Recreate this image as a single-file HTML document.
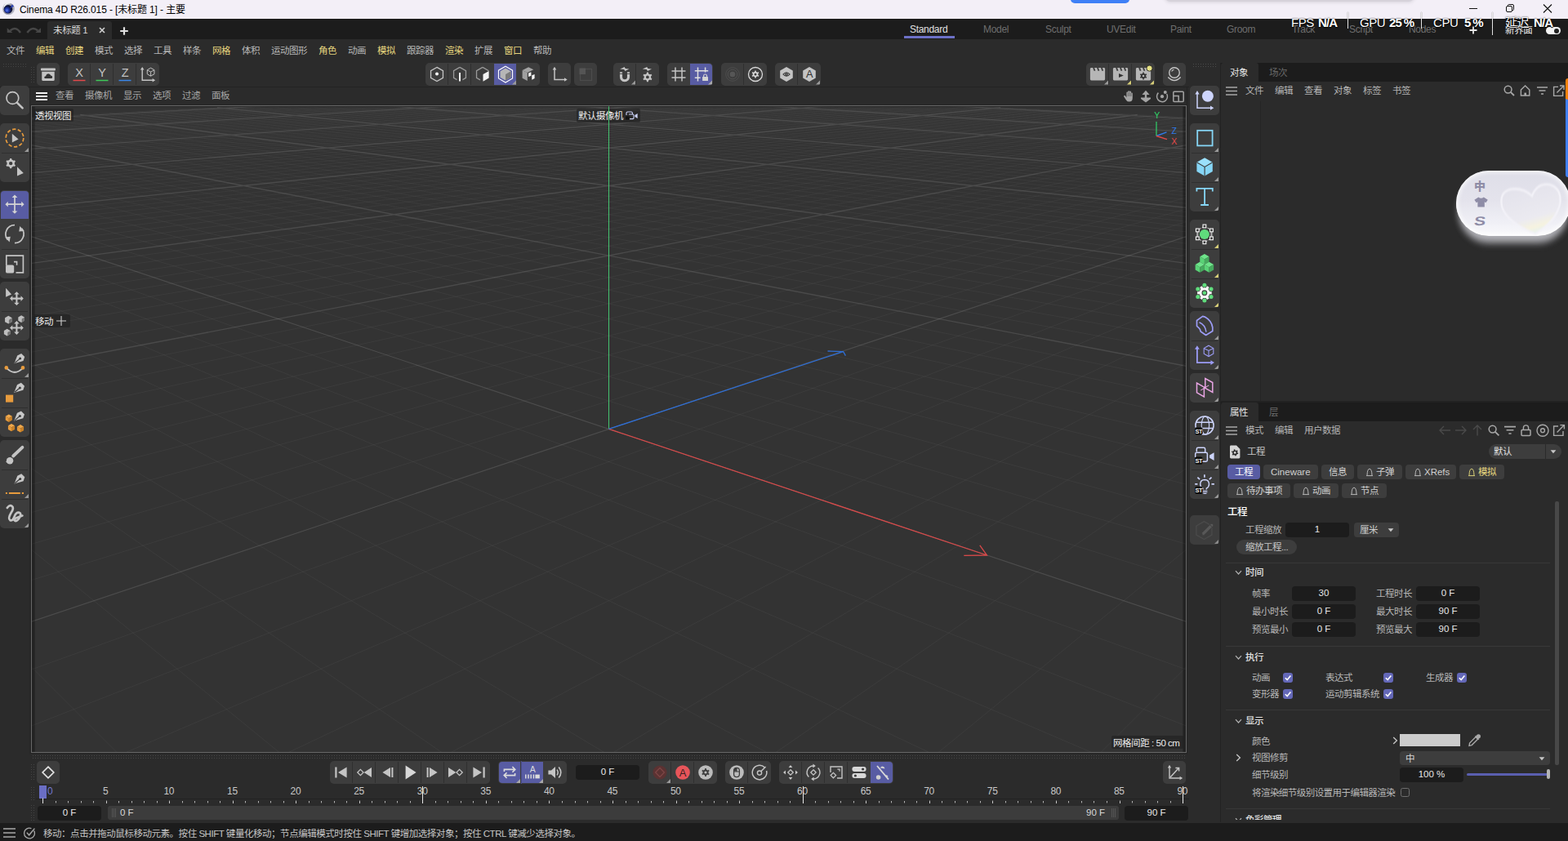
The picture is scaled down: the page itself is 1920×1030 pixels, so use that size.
<!DOCTYPE html><html lang="zh"><head><meta charset="utf-8"><title>Cinema 4D</title><style>
html,body{margin:0;padding:0;}
body{width:1920px;height:1030px;overflow:hidden;background:#2b2b2b;font-family:"Liberation Sans","Noto Sans CJK SC",sans-serif;font-size:11.5px;color:#bdbdbd;position:relative;letter-spacing:-0.35px;}
div,span,svg{position:absolute;box-sizing:border-box;}
.t{white-space:nowrap;line-height:16px;height:16px;}
.grp{background:#3d3d3d;border-radius:5px;overflow:hidden;}
.sep{background:#2f2f2f;}
.act{background:#585ca3;}
.fld{background:#1c1c1c;border-radius:4px;color:#e6e6e6;text-align:center;line-height:17px;white-space:nowrap;letter-spacing:0;}
.pill{background:#3d3d3d;border-radius:4px;color:#c8c8c8;line-height:18px;white-space:nowrap;}
.cb{width:12px;height:12px;border-radius:3px;background:#6468b8;}
.hl{height:1px;background:#3a3a3a;}
.b{font-weight:bold;color:#dcdcdc;}
</style></head><body><div style="left:36px;top:106px;width:1418px;height:818px;background:#2b2b2b;border:1px solid #232323;border-left-color:#272727;border-bottom-color:#2b2b2b;"></div><svg style="left:44px;top:113px;" width="15" height="11" viewBox="0 0 15 11"><path d="M0 1H14M0 5H14M0 9H14" stroke="#f4f4f4" stroke-width="2"/></svg><span class="t" style="left:68px;top:109.2px;color:#a6a6a6;font-size:11.5px;letter-spacing:-0.5px;">查看</span><span class="t" style="left:104px;top:109.2px;color:#a6a6a6;font-size:11.5px;letter-spacing:-0.5px;">摄像机</span><span class="t" style="left:151px;top:109.2px;color:#a6a6a6;font-size:11.5px;letter-spacing:-0.5px;">显示</span><span class="t" style="left:187px;top:109.2px;color:#a6a6a6;font-size:11.5px;letter-spacing:-0.5px;">选项</span><span class="t" style="left:223px;top:109.2px;color:#a6a6a6;font-size:11.5px;letter-spacing:-0.5px;">过滤</span><span class="t" style="left:259px;top:109.2px;color:#a6a6a6;font-size:11.5px;letter-spacing:-0.5px;">面板</span><svg style="left:1375px;top:110px;" width="78" height="16" viewBox="0 0 78 16"><path d="M4.4 9.4V3.6Q4.4 2.6 5.3 2.6Q6.2 2.6 6.2 3.6V2.2Q6.2 1.2 7.15 1.2Q8.1 1.2 8.1 2.2V2.6Q8.1 1.6 9.05 1.6Q10 1.6 10 2.6V4.2Q10 3.4 10.9 3.4Q11.8 3.4 11.8 4.4V10Q11.8 14.6 7.8 14.6Q5.2 14.6 3.9 12.4L1.3 8.4Q0.8 7.4 1.6 6.9Q2.4 6.5 3.1 7.5Z" fill="#a4a4a4"/><path d="M6.2 3.4V8M8.1 2.6V8M10 4V8" stroke="#2b2b2b" stroke-width="0.5"/><path d="M28 0.8L32.6 6H29.2V9.4H34V11L28 15.6L22 11V9.4H26.8V6H23.4Z" fill="#a4a4a4"/><path d="M43.4 3.6A6.5 6.5 0 1 0 53.7 5" fill="none" stroke="#a4a4a4" stroke-width="1.5"/><circle cx="51.8" cy="2.9" r="2" fill="#a4a4a4"/><circle cx="48" cy="8.2" r="2.1" fill="#a4a4a4"/><rect x="61.8" y="2.2" width="12.4" height="12.4" rx="1" fill="none" stroke="#a4a4a4" stroke-width="1.5"/><path d="M61.8 7.4H68.2V14.6" fill="none" stroke="#a4a4a4" stroke-width="1.5"/></svg><div style="left:38px;top:129px;width:1415px;height:793px;background:#333333;border:1px solid #686868;box-shadow:0 0 0 1px #252525;"></div><svg style="left:39px;top:130px;overflow:hidden;" width="1413" height="791" viewBox="0 0 1413 791"><defs><linearGradient id="fade" x1="0" y1="0" x2="0" y2="1"><stop offset="0" stop-color="#fff" stop-opacity="0"/><stop offset="0.002" stop-color="#fff" stop-opacity="1"/><stop offset="1" stop-color="#fff" stop-opacity="1"/></linearGradient><linearGradient id="fade2" x1="0" y1="0" x2="0" y2="1"><stop offset="0" stop-color="#fff" stop-opacity="0"/><stop offset="0.004" stop-color="#fff" stop-opacity="0.75"/><stop offset="0.1" stop-color="#fff" stop-opacity="0.9"/><stop offset="0.25" stop-color="#fff" stop-opacity="1"/></linearGradient><mask id="gm" maskUnits="userSpaceOnUse" x="0" y="0" width="1413" height="791"><rect x="0" y="0" width="1413" height="791" fill="url(#fade)"/></mask><mask id="gm2" maskUnits="userSpaceOnUse" x="0" y="0" width="1413" height="791"><rect x="0" y="0" width="1413" height="791" fill="url(#fade2)"/></mask></defs><g mask="url(#gm2)" fill="none"><path d="M-2.0 13.8L294.1 -2.0M-2.0 16.6L339.3 -2.0M-2.0 18.1L361.9 -2.0M-2.0 19.6L384.5 -2.0M-2.0 21.2L407.1 -2.0M-2.0 22.7L429.7 -2.0M-2.0 24.4L452.4 -2.0M-2.0 26.1L475.0 -2.0M-2.0 27.8L497.6 -2.0M-2.0 29.5L520.2 -2.0M-2.0 33.2L565.4 -2.0M-2.0 35.1L588.0 -2.0M-2.0 37.1L610.6 -2.0M-2.0 39.1L633.2 -2.0M-2.0 41.2L655.8 -2.0M-2.0 43.4L678.4 -2.0M-2.0 45.6L701.0 -2.0M-2.0 47.9L723.6 -2.0M-2.0 50.2L746.2 -2.0M-2.0 55.1L791.4 -2.0M-2.0 57.7L814.0 -2.0M-2.0 60.4L836.6 -2.0M-2.0 63.1L859.2 -2.0M-2.0 66.0L881.8 -2.0M-2.0 68.9L904.4 -2.0M-2.0 72.0L927.0 -2.0M-2.0 75.2L949.6 -2.0M-2.0 78.4L972.2 -2.0M-2.0 85.4L1017.4 -2.0M-2.0 89.1L1040.1 -2.0M-2.0 92.9L1062.7 -2.0M-2.0 96.8L1085.3 -2.0M-2.0 101.0L1107.9 -2.0M-2.0 105.3L1126.3 -1.6M-2.0 109.8L1140.9 -0.8M-2.0 114.5L1155.8 -0.0M-2.0 119.4L1170.9 0.8M-2.0 129.9L1201.8 2.4M-2.0 135.5L1217.6 3.3M-2.0 141.4L1233.7 4.1M-2.0 147.6L1250.0 5.0M-2.0 154.1L1266.6 5.9M-2.0 161.0L1283.5 6.8M-2.0 168.3L1300.6 7.7M-2.0 175.9L1318.0 8.6M-2.0 184.0L1335.8 9.6M-2.0 201.7L1372.1 11.5M-2.0 211.4L1390.8 12.5M-2.0 221.8L1409.7 13.5M-2.0 232.8L1415.0 16.7M-2.0 244.6L1415.0 20.9M-2.0 257.3L1415.0 25.4M-2.0 270.9L1415.0 30.3M-2.0 285.6L1415.0 35.5M-2.0 301.5L1415.0 41.2M-2.0 337.5L1415.0 54.1M-2.0 685.4L105.6 793.0M-2.0 358.0L1415.0 61.5M-2.0 542.0L304.8 793.0M-2.0 380.6L1415.0 69.5M-2.0 442.6L504.1 793.0M-2.0 405.4L1415.0 78.4M-2.0 369.8L703.4 793.0M-2.0 432.9L1415.0 88.2M-2.0 314.1L902.6 793.0M-2.0 463.6L1415.0 99.2M-2.0 270.1L1101.9 793.0M-2.0 498.0L1415.0 111.5M-2.0 234.5L1301.2 793.0M-2.0 536.8L1415.0 125.4M-2.0 205.1L1415.0 759.6M-2.0 581.0L1415.0 141.2M-2.0 180.4L1415.0 690.5M-2.0 690.5L1415.0 180.4M-2.0 141.2L1415.0 581.0M-2.0 759.6L1415.0 205.1M-2.0 125.4L1415.0 536.8M111.8 793.0L1415.0 234.5M-2.0 111.5L1415.0 498.0M311.1 793.0L1415.0 270.1M-2.0 99.2L1415.0 463.6M510.4 793.0L1415.0 314.1M-2.0 88.2L1415.0 432.9M709.6 793.0L1415.0 369.8M-2.0 78.4L1415.0 405.4M908.9 793.0L1415.0 442.6M-2.0 69.5L1415.0 380.6M1108.2 793.0L1415.0 542.0M-2.0 61.5L1415.0 358.0M1307.4 793.0L1415.0 685.4M-2.0 54.1L1415.0 337.5M-2.0 41.2L1415.0 301.5M-2.0 35.5L1415.0 285.6M-2.0 30.3L1415.0 270.9M-2.0 25.4L1415.0 257.3M-2.0 20.9L1415.0 244.6M-2.0 16.7L1415.0 232.8M3.3 13.5L1415.0 221.8M22.2 12.5L1415.0 211.4M40.9 11.5L1415.0 201.7M77.2 9.6L1415.0 184.0M95.0 8.6L1415.0 175.9M112.4 7.7L1415.0 168.3M129.5 6.8L1415.0 161.0M146.4 5.9L1415.0 154.1M163.0 5.0L1415.0 147.6M179.3 4.1L1415.0 141.4M195.4 3.3L1415.0 135.5M211.2 2.4L1415.0 129.9M242.1 0.8L1415.0 119.4M257.2 -0.0L1415.0 114.5M272.1 -0.8L1415.0 109.8M286.7 -1.6L1415.0 105.3M305.1 -2.0L1415.0 101.0M327.7 -2.0L1415.0 96.8M350.3 -2.0L1415.0 92.9M372.9 -2.0L1415.0 89.1M395.6 -2.0L1415.0 85.4M440.8 -2.0L1415.0 78.4M463.4 -2.0L1415.0 75.2M486.0 -2.0L1415.0 72.0M508.6 -2.0L1415.0 68.9M531.2 -2.0L1415.0 66.0M553.8 -2.0L1415.0 63.1M576.4 -2.0L1415.0 60.4M599.0 -2.0L1415.0 57.7M621.6 -2.0L1415.0 55.1M666.8 -2.0L1415.0 50.2M689.4 -2.0L1415.0 47.9M712.0 -2.0L1415.0 45.6M734.6 -2.0L1415.0 43.4M757.2 -2.0L1415.0 41.2M779.8 -2.0L1415.0 39.1M802.4 -2.0L1415.0 37.1M825.0 -2.0L1415.0 35.1M847.6 -2.0L1415.0 33.2M892.8 -2.0L1415.0 29.5M915.4 -2.0L1415.0 27.8M938.0 -2.0L1415.0 26.1M960.6 -2.0L1415.0 24.4M983.3 -2.0L1415.0 22.7M1005.9 -2.0L1415.0 21.2M1028.5 -2.0L1415.0 19.6M1051.1 -2.0L1415.0 18.1M1073.7 -2.0L1415.0 16.6M1118.9 -2.0L1415.0 13.8" stroke="#fff" stroke-opacity="0.042" stroke-width="1"/></g><g mask="url(#gm)" fill="none"><path d="M-2.0 15.2L316.7 -2.0M-2.0 31.4L542.8 -2.0M-2.0 52.6L768.8 -2.0M-2.0 81.8L994.8 -2.0M-2.0 124.5L1186.2 1.6M-2.0 192.6L1353.8 10.5M-2.0 318.7L1415.0 47.4M-2.0 47.4L1415.0 318.7M59.2 10.5L1415.0 192.6M226.8 1.6L1415.0 124.5M418.2 -2.0L1415.0 81.8M644.2 -2.0L1415.0 52.6M870.2 -2.0L1415.0 31.4M1096.3 -2.0L1415.0 15.2" stroke="#fff" stroke-opacity="0.115" stroke-width="1.4"/><path d="M-2.0 631.7L1415.0 159.3M-2.0 159.3L1415.0 631.7" stroke="#fff" stroke-opacity="0.125" stroke-width="1.15"/></g><path d="M706.5 395.4V0" stroke="#45c470" stroke-width="1"/><path d="M706.5 395.4L1169.5 550M1141.3 550.4L1169.5 550L1160.8 537.8" stroke="#d94a4a" stroke-width="1.3" fill="none"/><path d="M706.5 395.4L993.5999999999999 300.6M974.5 300L993.5999999999999 300.6L996.4000000000001 305.6" stroke="#2f6fd6" stroke-width="1.3" fill="none"/><rect x="0" y="0" width="3.6" height="791" fill="#000" fill-opacity="0.3"/><rect x="1409.4" y="0" width="3.6" height="791" fill="#000" fill-opacity="0.3"/><rect x="3.6" y="0" width="1405.8" height="1" fill="#000" fill-opacity="0.25"/><path d="M1377 36.5V19" stroke="#2fd46a" stroke-width="1.2"/><path d="M1377 36.5L1389.5 31.9" stroke="#2f7bea" stroke-width="1.4"/><path d="M1377 36.5L1390 40.7" stroke="#e34a4a" stroke-width="1.4"/><text x="1377.6" y="14.599999999999994" font-size="10.5" text-anchor="middle" fill="#2fd46a" font-family="Liberation Sans,sans-serif">Y</text><text x="1398.6" y="33.599999999999994" font-size="10.5" text-anchor="middle" fill="#2f7bea" font-family="Liberation Sans,sans-serif">Z</text><text x="1398.6" y="47" font-size="10.5" text-anchor="middle" fill="#e34a4a" font-family="Liberation Sans,sans-serif">X</text></svg><div style="left:41px;top:133px;width:49px;height:16px;background:rgba(30,30,30,.55);border-radius:2px;"></div><span class="t" style="left:43px;top:133.5px;color:#ececec;font-size:11.5px;letter-spacing:-0.5px;">透视视图</span><div style="left:706px;top:132.5px;width:78px;height:17px;background:rgba(30,30,30,.55);border-radius:2px;"></div><span class="t" style="left:708px;top:133.5px;color:#ececec;font-size:11.5px;letter-spacing:-0.5px;">默认摄像机</span><svg style="left:765px;top:135px;" width="17" height="12" viewBox="0 0 17 12"><path d="M2 6V3.4Q2 2 3.4 2H8Q9.4 2 9.4 3.4V5" fill="none" stroke="#cdd4fb" stroke-width="1.1"/><path d="M5 5H10Q11 5 11 6V9.6Q11 10.6 10 10.6H6" fill="none" stroke="#cdd4fb" stroke-width="1.1"/><path d="M15.6 4V10L12.4 8V6Z" fill="#cdd4fb"/><rect x="1" y="7.4" width="4.6" height="4" rx="1" fill="#111"/></svg><div style="left:745px;top:131px;width:1px;height:20px;background:#45c470;"></div><div style="left:41px;top:385px;width:45px;height:16px;background:rgba(30,30,30,.55);border-radius:2px;"></div><span class="t" style="left:43px;top:385.5px;color:#ececec;font-size:11.5px;letter-spacing:-0.5px;">移动</span><svg style="left:68px;top:386px;" width="14" height="14" viewBox="0 0 14 14"><path d="M7 1V13M1 7H13" stroke="#cfcfcf" stroke-width="1.1"/></svg><div style="left:1361px;top:901px;width:88px;height:16px;background:rgba(30,30,30,.55);border-radius:2px;"></div><span class="t" style="left:1363px;top:901.5px;color:#ececec;font-size:11.5px;letter-spacing:-0.45px;">网格间距 : 50 cm</span><svg style="left:40px;top:925px;" width="1412" height="5" viewBox="0 0 1412 5"><path d="M0 .5H1412M0 3.5H1412" stroke="#484848" stroke-width="1" stroke-dasharray="1 2"/></svg><div style="left:0px;top:106px;width:1456px;height:1px;background:#232323;"></div><svg style="left:4px;top:78px;" width="30" height="5" viewBox="0 0 30 5"><path d="M0 .5H29M0 3.5H29" stroke="#444" stroke-width="1" stroke-dasharray="1 2"/></svg><svg style="left:38px;top:82px;" width="5" height="20" viewBox="0 0 5 20"><path d="M.5 0V20M3.5 0V20" stroke="#444" stroke-width="1" stroke-dasharray="1 2"/></svg><div class="grp" style="left:45px;top:77px;width:28px;height:27.5px;"><svg style="left:0px;top:0" width="28" height="27.5" viewBox="0 0 28 27.5"><rect x="5" y="6.6" width="17.9" height="2.9" rx="0.8" fill="#c4c4c4"/><path d="M6.25 10.75H21.7V20.4Q21.7 22 20.1 22H7.85Q6.25 22 6.25 20.4Z" fill="#c4c4c4"/><path d="M10.6 19.1Q9.2 19.1 9.2 17.7Q9.3 16.2 11 16.2Q11.6 13.4 14.2 13.3Q16.6 13.4 17.2 15.6Q19.2 15.6 19.2 17.4Q19.2 19.1 17.6 19.1Z" fill="#333"/></svg></div><div class="grp" style="left:83px;top:77px;width:112px;height:27.5px;"><svg style="left:0px;top:0" width="28" height="27.5" viewBox="0 0 28 27.5"><text x="14" y="16.5" font-size="14.5" text-anchor="middle" fill="#c4c4c4" font-family="Liberation Sans,sans-serif">X</text><path d="M6.5 21.5H21.5" stroke="#e2484b" stroke-width="1.6"/></svg><div class="sep" style="left:27px;top:1px;width:1px;height:25.5px"></div><svg style="left:28px;top:0" width="28" height="27.5" viewBox="0 0 28 27.5"><text x="14" y="16.5" font-size="14.5" text-anchor="middle" fill="#c4c4c4" font-family="Liberation Sans,sans-serif">Y</text><path d="M6.5 21.5H21.5" stroke="#3fc95a" stroke-width="1.6"/></svg><div class="sep" style="left:55px;top:1px;width:1px;height:25.5px"></div><svg style="left:56px;top:0" width="28" height="27.5" viewBox="0 0 28 27.5"><text x="14" y="16.5" font-size="14.5" text-anchor="middle" fill="#c4c4c4" font-family="Liberation Sans,sans-serif">Z</text><path d="M6.5 21.5H21.5" stroke="#3a86e8" stroke-width="1.6"/></svg><div class="sep" style="left:83px;top:1px;width:1px;height:25.5px"></div><svg style="left:84px;top:0" width="28" height="27.5" viewBox="0 0 28 27.5"><path d="M7.2 7V21.2H21" stroke="#c4c4c4" stroke-width="1.4" fill="none"/><path d="M4.9 8.6L7.2 5L9.5 8.6ZM19.6 18.9L23.2 21.2L19.6 23.5Z" fill="#c4c4c4"/><path d="M17.60 6.20L21.93 8.70L21.93 13.70L17.60 16.20L13.27 13.70L13.27 8.70Z" fill="none" stroke="#c4c4c4" stroke-width="1"/><path d="M13.3 8.8L17.6 11L21.9 8.8M17.6 11V16" stroke="#c4c4c4" stroke-width="0.9" fill="none"/></svg></div><div class="grp" style="left:521px;top:77px;width:140px;height:27.5px;"><svg style="left:0px;top:0" width="28" height="27.5" viewBox="0 0 28 27.5"><path d="M14.00 5.40L21.45 9.70L21.45 18.30L14.00 22.60L6.55 18.30L6.55 9.70Z" fill="none" stroke="#c4c4c4" stroke-width="1.3"/><circle cx="14" cy="13.5" r="2" fill="#f4f4f4"/></svg><div class="sep" style="left:27px;top:1px;width:1px;height:25.5px"></div><svg style="left:28px;top:0" width="28" height="27.5" viewBox="0 0 28 27.5"><path d="M14 5.4L21.45 9.7V18.3L17.5 20.6M10.5 20.6L6.55 18.3V9.7L14 5.4" fill="none" stroke="#9a9a9a" stroke-width="1.3"/><path d="M14 12V22.5" stroke="#f4f4f4" stroke-width="2"/></svg><div class="sep" style="left:55px;top:1px;width:1px;height:25.5px"></div><svg style="left:56px;top:0" width="28" height="27.5" viewBox="0 0 28 27.5"><path d="M14 5.4L6.55 9.7V18.3L11 20.9M14 5.4L21.45 9.7" fill="none" stroke="#9a9a9a" stroke-width="1.3"/><path d="M14.5 14L21.6 10V18.6L14.5 22.7Z" fill="#f4f4f4"/></svg><div class="act" style="left:84px;top:1px;width:27px;height:25.5px;border-radius:0"></div><svg style="left:84px;top:0" width="28" height="27.5" viewBox="0 0 28 27.5"><path d="M14.00 4.20L22.57 9.15L22.57 19.05L14.00 24.00L5.43 19.05L5.43 9.15Z" fill="none" stroke="#ffffff" stroke-width="1.1"/><path d="M14.00 6.60L20.50 10.35L20.50 17.85L14.00 21.60L7.50 17.85L7.50 10.35Z" fill="#b6b6b6"/><path d="M14 14.1L20.5 10.35V17.85L14 21.6Z" fill="#7a7a7a"/><path d="M27 21.5V26.5H22Z" fill="#9a9a9a"/></svg><svg style="left:112px;top:0" width="28" height="27.5" viewBox="0 0 28 27.5"><path d="M6.6 9.1L14.1 5.3L20.3 8.25L12.8 12Z" fill="#a4a4a4"/><path d="M6.6 9.1L12.8 12V22L6.6 18.7Z" fill="#a0a0a0"/><path d="M14.1 12.4L17.4 11.2V15.75L14.1 17Z" fill="#f6f6f6"/><path d="M18.25 15.3L21.6 14.1V19.1L18.25 20.75Z" fill="#f6f6f6"/></svg></div><div class="grp" style="left:671px;top:77px;width:28px;height:27.5px;"><svg style="left:0px;top:0" width="28" height="27.5" viewBox="0 0 28 27.5"><path d="M8 7V20.5H21.5" stroke="#c4c4c4" stroke-width="1.5" fill="none"/><path d="M5.7 8.5L8 4.8L10.3 8.5ZM20 18.2L23.7 20.5L20 22.8Z" fill="#c4c4c4"/></svg></div><div class="grp" style="left:703px;top:77px;width:28px;height:27.5px;"><svg style="left:0px;top:0" width="28" height="27.5" viewBox="0 0 28 27.5"><rect x="7.5" y="7.5" width="14" height="14" fill="none" stroke="#4c4c4c" stroke-width="1.2"/><rect x="6.5" y="6.5" width="7.5" height="7.5" fill="#555"/></svg></div><div class="grp" style="left:751px;top:77px;width:56px;height:27.5px;"><svg style="left:0px;top:0" width="28" height="27.5" viewBox="0 0 28 27.5"><path d="M9.5 11.2V17.25A4.5 4.5 0 0 0 18.5 17.25V11.2" fill="none" stroke="#c4c4c4" stroke-width="3.1"/><path d="M7.5 13.4H20.5" stroke="#3d3d3d" stroke-width="0.9"/><path d="M8.2 7.6L13.6 5.1L14.8 7L19.4 7.4L14.4 9.9L13.2 8Z" fill="#c4c4c4"/><path d="M27 21.5V26.5H22Z" fill="#9a9a9a"/></svg><div class="sep" style="left:27px;top:1px;width:1px;height:25.5px"></div><svg style="left:28px;top:0" width="28" height="27.5" viewBox="0 0 28 27.5"><path d="M12.79 13.25L12.95 11.58L14.85 11.58L15.01 13.25L16.05 13.68L16.94 14.36L18.47 13.66L19.42 15.31L18.05 16.29L18.20 17.40L18.05 18.51L19.42 19.49L18.47 21.14L16.94 20.44L16.05 21.12L15.01 21.55L14.85 23.22L12.95 23.22L12.79 21.55L11.75 21.12L10.86 20.44L9.33 21.14L8.38 19.49L9.75 18.51L9.60 17.40L9.75 16.29L8.38 15.31L9.33 13.66L10.86 14.36L11.75 13.68ZM12.00 17.40a1.9 1.9 0 1 0 3.8 0a1.9 1.9 0 1 0 -3.8 0Z" fill="#c4c4c4" fill-rule="evenodd"/><path d="M7.799999999999999 7.6L13.2 5.1L14.4 7L19.0 7.4L14.0 9.9L12.799999999999999 8Z" fill="#c4c4c4"/></svg></div><div class="grp" style="left:817px;top:77px;width:56px;height:27.5px;"><svg style="left:0px;top:0" width="28" height="27.5" viewBox="0 0 28 27.5"><path d="M10 5.5V22.5M18 5.5V22.5M5.5 10H22.5M5.5 18H22.5" stroke="#c4c4c4" stroke-width="1.5"/></svg><div class="act" style="left:28px;top:1px;width:27px;height:25.5px;border-radius:0 4px 4px 0"></div><svg style="left:28px;top:0" width="28" height="27.5" viewBox="0 0 28 27.5"><path d="M9.5 5.6V22.5M18.6 5.6V11.6M5.8 9.8H22.2M5.8 18.2H12.6" stroke="#dedede" stroke-width="1.5"/><rect x="15.1" y="17" width="6.9" height="5" rx="0.6" fill="#d4d4d4"/><path d="M16.6 17V15.9A1.95 1.95 0 0 1 20.5 15.9V17" fill="none" stroke="#d4d4d4" stroke-width="1.1"/><path d="M27 21.5V26.5H22Z" fill="#a8a8a8"/></svg></div><div class="grp" style="left:883px;top:77px;width:56px;height:27.5px;"><svg style="left:0px;top:0" width="28" height="27.5" viewBox="0 0 28 27.5"><circle cx="14" cy="14" r="8.3" fill="none" stroke="#4d4d4d" stroke-width="1"/><circle cx="14" cy="14" r="5.8" fill="none" stroke="#505050" stroke-width="1"/><circle cx="14" cy="14" r="3.3" fill="#565656"/></svg><div class="sep" style="left:27px;top:1px;width:1px;height:25.5px"></div><svg style="left:28px;top:0" width="28" height="27.5" viewBox="0 0 28 27.5"><circle cx="14" cy="14" r="8.5" fill="none" stroke="#d8d8d8" stroke-width="1.3"/><path d="M13.15 10.81L13.26 9.46L14.74 9.46L14.85 10.81L15.65 11.14L16.33 11.67L17.56 11.09L18.30 12.37L17.19 13.15L17.30 14.00L17.19 14.85L18.30 15.63L17.56 16.91L16.33 16.33L15.65 16.86L14.85 17.19L14.74 18.54L13.26 18.54L13.15 17.19L12.35 16.86L11.67 16.33L10.44 16.91L9.70 15.63L10.81 14.85L10.70 14.00L10.81 13.15L9.70 12.37L10.44 11.09L11.67 11.67L12.35 11.14ZM12.50 14.00a1.5 1.5 0 1 0 3.0 0a1.5 1.5 0 1 0 -3.0 0Z" fill="#d8d8d8" fill-rule="evenodd"/></svg></div><div class="grp" style="left:949px;top:77px;width:56px;height:27.5px;"><svg style="left:0px;top:0" width="28" height="27.5" viewBox="0 0 28 27.5"><path d="M14.00 5.00L21.79 9.50L21.79 18.50L14.00 23.00L6.21 18.50L6.21 9.50Z" fill="#c4c4c4"/><path d="M9.2 14.1Q14 8.6 18.8 14.1Q14 19.6 9.2 14.1Z" fill="#333"/><path d="M10.6 14.1Q14 10.6 17.4 14.1Q14 17.6 10.6 14.1Z" fill="#c4c4c4"/><circle cx="14" cy="14.1" r="1.9" fill="#333"/><circle cx="14" cy="14.1" r="0.7" fill="#c4c4c4"/></svg><div class="sep" style="left:27px;top:1px;width:1px;height:25.5px"></div><svg style="left:28px;top:0" width="28" height="27.5" viewBox="0 0 28 27.5"><path d="M14.00 5.00L21.79 9.50L21.79 18.50L14.00 23.00L6.21 18.50L6.21 9.50Z" fill="#c4c4c4"/><text x="14" y="18.3" font-size="12.8" text-anchor="middle" fill="#303030" font-family="Liberation Sans,sans-serif">A</text><path d="M27 21.5V26.5H22Z" fill="#9a9a9a"/></svg></div><div class="grp" style="left:1330px;top:77px;width:84px;height:27.5px;"><svg style="left:0px;top:0" width="28" height="27.5" viewBox="0 0 28 27.5"><rect x="4.9" y="6.1" width="18.2" height="15.3" rx="1.4" fill="#b6b6b6"/><path d="M8.1 5.8H10.0L11.4 9.7H9.5Z" fill="#3d3d3d"/><path d="M13.0 5.8H14.9L16.3 9.7H14.4Z" fill="#3d3d3d"/><path d="M17.9 5.8H19.8L21.2 9.7H19.3Z" fill="#3d3d3d"/><path d="M27 21.5V26.5H22Z" fill="#9a9a9a"/></svg><div class="sep" style="left:27px;top:1px;width:1px;height:25.5px"></div><svg style="left:28px;top:0" width="28" height="27.5" viewBox="0 0 28 27.5"><rect x="4.9" y="6.1" width="18.2" height="15.3" rx="1.4" fill="#b6b6b6"/><path d="M8.1 5.8H10.0L11.4 9.7H9.5Z" fill="#3d3d3d"/><path d="M13.0 5.8H14.9L16.3 9.7H14.4Z" fill="#3d3d3d"/><path d="M17.9 5.8H19.8L21.2 9.7H19.3Z" fill="#3d3d3d"/><path d="M12 12.9V18.1L17.8 15.5Z" fill="#333"/><path d="M27 21.5V26.5H22Z" fill="#d8cf78"/></svg><div class="sep" style="left:55px;top:1px;width:1px;height:25.5px"></div><svg style="left:56px;top:0" width="28" height="27.5" viewBox="0 0 28 27.5"><rect x="4.9" y="6.1" width="18.2" height="15.3" rx="1.4" fill="#b6b6b6"/><path d="M8.1 5.8H10.0L11.4 9.7H9.5Z" fill="#3d3d3d"/><path d="M13.0 5.8H14.9L16.3 9.7H14.4Z" fill="#3d3d3d"/><path d="M17.9 5.8H19.8L21.2 9.7H19.3Z" fill="#3d3d3d"/><path d="M13.23 12.91L13.33 11.56L14.79 11.56L14.89 12.91L15.66 13.23L16.32 13.74L17.54 13.15L18.27 14.41L17.15 15.17L17.26 16.00L17.15 16.83L18.27 17.59L17.54 18.85L16.32 18.26L15.66 18.77L14.89 19.09L14.79 20.44L13.33 20.44L13.23 19.09L12.46 18.77L11.80 18.26L10.58 18.85L9.85 17.59L10.97 16.83L10.86 16.00L10.97 15.17L9.85 14.41L10.58 13.15L11.80 13.74L12.46 13.23ZM12.81 16.00a1.25 1.25 0 1 0 2.5 0a1.25 1.25 0 1 0 -2.5 0Z" fill="#333" fill-rule="evenodd"/><circle cx="21.5" cy="6.6" r="3.6" fill="#e6e184" stroke="#262626" stroke-width="0.9"/><path d="M27 21.5V26.5H22Z" fill="#d8cf78"/></svg></div><div class="grp" style="left:1424px;top:77px;width:28px;height:27.5px;"><svg style="left:0px;top:0" width="28" height="27.5" viewBox="0 0 28 27.5"><circle cx="14" cy="12" r="6.3" fill="none" stroke="#c4c4c4" stroke-width="1.4"/><path d="M10.6 10.5A3.8 3.8 0 0 1 13.5 8.2" stroke="#c4c4c4" stroke-width="1.1" fill="none"/><path d="M6.3 17.5Q14 25.5 21.7 17.5" fill="none" stroke="#c4c4c4" stroke-width="1.5"/></svg></div><div class="grp" style="left:0px;top:105px;width:36px;height:36px;"><svg style="left:0;top:0px" width="36" height="36" viewBox="0 0 36 36"><circle cx="15.4" cy="15" r="7.4" fill="none" stroke="#c4c4c4" stroke-width="1.7"/><path d="M20.8 20.6L27.6 27.4" stroke="#c4c4c4" stroke-width="2.6" stroke-linecap="round"/></svg></div><div class="grp" style="left:0px;top:151px;width:36px;height:72px;"><svg style="left:0;top:0px" width="36" height="36" viewBox="0 0 36 36"><circle cx="18" cy="18" r="10.8" fill="none" stroke="#e79b3d" stroke-width="1.7" stroke-dasharray="4.4 2.4"/><path d="M14.8 12.8V23.6L22.6 19.6Z" fill="#c4c4c4"/><path d="M35 30V35H30Z" fill="#9a9a9a"/></svg><div class="sep" style="left:2px;top:36px;width:32px;height:1px"></div><svg style="left:0;top:36px" width="36" height="36" viewBox="0 0 36 36"><path d="M11.98 8.56L12.20 6.98L14.20 6.98L14.42 8.56L15.55 9.03L16.52 9.78L18.00 9.17L19.00 10.91L17.74 11.88L17.90 13.10L17.74 14.32L19.00 15.29L18.00 17.03L16.52 16.42L15.55 17.17L14.42 17.64L14.20 19.22L12.20 19.22L11.98 17.64L10.85 17.17L9.88 16.42L8.40 17.03L7.40 15.29L8.66 14.32L8.50 13.10L8.66 11.88L7.40 10.91L8.40 9.17L9.88 9.78L10.85 9.03ZM11.00 13.10a2.2 2.2 0 1 0 4.4 0a2.2 2.2 0 1 0 -4.4 0Z" fill="#c4c4c4" fill-rule="evenodd"/><path d="M21 17.3V28.6L28.8 25Z" fill="#c4c4c4"/></svg></div><div class="grp" style="left:0px;top:233px;width:36px;height:108px;"><div class="act" style="left:1px;top:1px;width:34px;height:34px;border-radius:4px 4px 0 0"></div><svg style="left:0;top:0px" width="36" height="36" viewBox="0 0 36 36"><path d="M8.4 17.2H27.6M18 7.6V26.799999999999997" stroke="#d4d4d4" stroke-width="1.7"/><path d="M6.4 17.2l3.4 -3.4v6.8ZM29.6 17.2l-3.4 -3.4v6.8ZM18 5.6l-3.4 3.4h6.8ZM18 28.799999999999997l-3.4 -3.4h6.8Z" fill="#d4d4d4"/></svg><svg style="left:0;top:36px" width="36" height="36" viewBox="0 0 36 36"><path d="M18 6.7A11 11 0 0 0 9.4 24.6" fill="none" stroke="#c4c4c4" stroke-width="1.7"/><path d="M6.2 21.4L12.8 20.8L11.6 27.4Z" fill="#c4c4c4"/><path d="M18 28.7A11 11 0 0 0 26.6 10.8" fill="none" stroke="#c4c4c4" stroke-width="1.7"/><path d="M29.8 14L23.2 14.6L24.4 8Z" fill="#c4c4c4"/></svg><div class="sep" style="left:2px;top:72px;width:32px;height:1px"></div><svg style="left:0;top:72px" width="36" height="36" viewBox="0 0 36 36"><path d="M7.8 20.5V8.2H28.4V28.8H19.5" fill="none" stroke="#c4c4c4" stroke-width="1.7"/><rect x="7" y="19.4" width="10.2" height="10.2" rx="2.2" fill="#c4c4c4"/><path d="M17 15.6H20.6V19.8" fill="none" stroke="#c4c4c4" stroke-width="1.6"/></svg></div><div class="grp" style="left:0px;top:345px;width:36px;height:72px;"><svg style="left:0;top:0px" width="36" height="36" viewBox="0 0 36 36"><path d="M7.1 7.8V18.7L14.1 15.4Z" fill="#c4c4c4"/><path d="M13.999999999999998 20.6H26.799999999999997M20.4 14.200000000000001V27.0" stroke="#c4c4c4" stroke-width="2.1"/><path d="M11.999999999999998 20.6l3.3 -3.3v6.6ZM28.799999999999997 20.6l-3.3 -3.3v6.6ZM20.4 12.200000000000001l-3.3 3.3h6.6ZM20.4 29.0l-3.3 -3.3h6.6Z" fill="#c4c4c4"/></svg><div class="sep" style="left:2px;top:36px;width:32px;height:1px"></div><svg style="left:0;top:36px" width="36" height="36" viewBox="0 0 36 36"><path d="M10.3 5.799999999999999L14.54 8.25V13.149999999999999L10.3 15.6L6.06 13.149999999999999V8.25Z" fill="#bebebe"/><path d="M14.54 8.55L10.9 10.7V15.299999999999999L14.54 13.149999999999999Z" fill="#727272"/><path d="M26.1 5.199999999999999L29.91 7.3999999999999995V11.8L26.1 14.0L22.29 11.8V7.3999999999999995Z" fill="#bebebe"/><path d="M29.91 7.699999999999999L26.700000000000003 9.6V13.7L29.91 11.8Z" fill="#727272"/><path d="M8.7 21.700000000000003L12.51 23.900000000000002V28.3L8.7 30.5L4.89 28.3V23.900000000000002Z" fill="#bebebe"/><path d="M12.51 24.200000000000003L9.299999999999999 26.1V30.2L12.51 28.3Z" fill="#727272"/><path d="M13.999999999999998 20.5H26.799999999999997M20.4 14.1V26.9" stroke="#c4c4c4" stroke-width="2.1"/><path d="M11.999999999999998 20.5l3.3 -3.3v6.6ZM28.799999999999997 20.5l-3.3 -3.3v6.6ZM20.4 12.1l-3.3 3.3h6.6ZM20.4 28.9l-3.3 -3.3h6.6Z" fill="#c4c4c4"/></svg></div><div class="grp" style="left:0px;top:427px;width:36px;height:108px;"><svg style="left:0;top:0px" width="36" height="36" viewBox="0 0 36 36"><path d="M17.40 18.20L21.20 8.40L26.10 6.00L30.20 10.00L28.50 14.90Z" fill="#c8c8c8"/><path d="M18.20 17.50L24.20 12.40" stroke="#3d3d3d" stroke-width="1.2"/><circle cx="24.60" cy="12.10" r="1.5" fill="#3d3d3d"/><path d="M8.6 24.4Q18 33.4 27.4 24.4" fill="none" stroke="#c4c4c4" stroke-width="2"/><circle cx="7.8" cy="23.4" r="2.3" fill="#e79b3d"/><circle cx="28" cy="23.4" r="2.3" fill="#e79b3d"/><path d="M35 30V35H30Z" fill="#9a9a9a"/></svg><div class="sep" style="left:2px;top:36px;width:32px;height:1px"></div><svg style="left:0;top:36px" width="36" height="36" viewBox="0 0 36 36"><path d="M17.20 18.00L21.00 8.20L25.90 5.80L30.00 9.80L28.30 14.70Z" fill="#c8c8c8"/><path d="M18.00 17.30L24.00 12.20" stroke="#3d3d3d" stroke-width="1.2"/><circle cx="24.40" cy="11.90" r="1.5" fill="#3d3d3d"/><rect x="7" y="20.6" width="9.2" height="9" fill="#e79b3d"/></svg><div class="sep" style="left:2px;top:72px;width:32px;height:1px"></div><svg style="left:0;top:72px" width="36" height="36" viewBox="0 0 36 36"><path d="M17.20 16.60L21.00 6.80L25.90 4.40L30.00 8.40L28.30 13.30Z" fill="#c8c8c8"/><path d="M18.00 15.90L24.00 10.80" stroke="#3d3d3d" stroke-width="1.2"/><circle cx="24.40" cy="10.50" r="1.5" fill="#3d3d3d"/><path d="M10.8 8.5L14.87 10.85L10.8 13.2L6.73 10.85Z" fill="#f0a94c"/><path d="M6.73 10.85L10.8 13.2V17.9L6.73 15.549999999999999Z" fill="#e79b3d"/><path d="M14.87 10.85L10.8 13.2V17.9L14.87 15.549999999999999Z" fill="#c98127"/><path d="M14 19.900000000000002L18.07 22.25L14 24.6L9.93 22.25Z" fill="#f0a94c"/><path d="M9.93 22.25L14 24.6V29.3L9.93 26.950000000000003Z" fill="#e79b3d"/><path d="M18.07 22.25L14 24.6V29.3L18.07 26.950000000000003Z" fill="#c98127"/><path d="M25 21.1L29.07 23.45L25 25.8L20.93 23.45Z" fill="#f0a94c"/><path d="M20.93 23.45L25 25.8V30.5L20.93 28.150000000000002Z" fill="#e79b3d"/><path d="M29.07 23.45L25 25.8V30.5L29.07 28.150000000000002Z" fill="#c98127"/></svg></div><div class="grp" style="left:0px;top:539px;width:36px;height:108px;"><svg style="left:0;top:0px" width="36" height="36" viewBox="0 0 36 36"><path d="M16.2 19.5L27.4 8.9" stroke="#c4c4c4" stroke-width="3.9" stroke-linecap="round"/><circle cx="12.1" cy="25.2" r="4.2" fill="#c4c4c4"/><path d="M7 26.4Q8.6 26.2 8.6 24.4L11.4 28.4Q9 28.6 7 26.4Z" fill="#c4c4c4"/></svg><div class="sep" style="left:2px;top:36px;width:32px;height:1px"></div><svg style="left:0;top:36px" width="36" height="36" viewBox="0 0 36 36"><path d="M17.50 17.50L21.30 7.70L26.20 5.30L30.30 9.30L28.60 14.20Z" fill="#c8c8c8"/><path d="M18.30 16.80L24.30 11.70" stroke="#3d3d3d" stroke-width="1.2"/><circle cx="24.70" cy="11.40" r="1.5" fill="#3d3d3d"/><path d="M6.9 29H8.9M10.9 29H24.8M26.8 29H29" stroke="#e79b3d" stroke-width="2"/><path d="M35 30V35H30Z" fill="#9a9a9a"/></svg><div class="sep" style="left:2px;top:72px;width:32px;height:1px"></div><svg style="left:0;top:72px" width="36" height="36" viewBox="0 0 36 36"><path d="M8.8 11Q11.6 6.8 14.6 8.8Q17.6 11.2 13.6 17Q9.4 24 12.4 26.2Q15.4 27.6 17.6 21.6Q19.6 16.4 23 16.6Q26.6 17.4 24.4 22Q21.6 27.6 18.6 27Q16.2 25.6 19.6 23.6Q23.4 22.2 27.4 20.6" fill="none" stroke="#c4c4c4" stroke-width="2.7" stroke-linecap="round"/><path d="M35 30V35H30Z" fill="#9a9a9a"/></svg></div><div style="left:1494px;top:77px;width:1px;height:930px;background:#222;"></div><svg style="left:1461px;top:78px;" width="30" height="5" viewBox="0 0 30 5"><path d="M0 .5H29M0 3.5H29" stroke="#4a4a4a" stroke-width="1" stroke-dasharray="1 2"/></svg><div class="grp" style="left:1457px;top:105px;width:36px;height:36px;"><svg style="left:0;top:0px" width="36" height="36" viewBox="0 0 36 36"><path d="M9 9V27.2H26.5" fill="none" stroke="#cdd4fb" stroke-width="1.5"/><path d="M6.4 10.4L9 6L11.6 10.4ZM25 24.6L29.4 27.2L25 29.8Z" fill="#cdd4fb"/><circle cx="21.9" cy="12.8" r="7" fill="#cdd4fb"/></svg></div><div class="grp" style="left:1457px;top:151px;width:36px;height:108px;"><svg style="left:0;top:0px" width="36" height="36" viewBox="0 0 36 36"><rect x="9.2" y="8.8" width="18.4" height="18.6" fill="none" stroke="#86d6f6" stroke-width="1.8"/><path d="M35 30V35H30Z" fill="#9a9a9a"/></svg><div class="sep" style="left:2px;top:36px;width:32px;height:1px"></div><svg style="left:0;top:36px" width="36" height="36" viewBox="0 0 36 36"><path d="M18.1 6.199999999999999L27.80 11.799999999999999L18.1 17.4L8.40 11.799999999999999Z" fill="#9be0fb"/><path d="M8.40 11.799999999999999L18.1 17.4V28.599999999999998L8.40 23.0Z" fill="#86d6f6"/><path d="M27.80 11.799999999999999L18.1 17.4V28.599999999999998L27.80 23.0Z" fill="#86d6f6"/><path d="M8.4 11.8L18.1 17.4L27.8 11.8M18.1 17.4V28.6" fill="none" stroke="#3d3d3d" stroke-width="1.1"/><path d="M35 30V35H30Z" fill="#9a9a9a"/></svg><div class="sep" style="left:2px;top:72px;width:32px;height:1px"></div><svg style="left:0;top:72px" width="36" height="36" viewBox="0 0 36 36"><path d="M8.4 11.6V7.8H27.8V11.6M18.1 7.8V28M13.2 28H23" fill="none" stroke="#86d6f6" stroke-width="1.8"/><path d="M35 30V35H30Z" fill="#9a9a9a"/></svg></div><div class="grp" style="left:1457px;top:269px;width:36px;height:108px;"><svg style="left:0;top:0px" width="36" height="36" viewBox="0 0 36 36"><path d="M17.90 8.00L26.47 12.95L26.47 22.85L17.90 27.80L9.33 22.85L9.33 12.95Z" fill="none" stroke="#e8e8e8" stroke-width="1" stroke-dasharray="2.6 1.7"/><path d="M9.33 14.6V21.2M26.47 14.6V21.2" stroke="#b0b0b0" stroke-width="2"/><rect x="16.00" y="6.10" width="3.8" height="3.8" fill="#3d3d3d" stroke="#f6f6f6" stroke-width="1.1"/><rect x="24.57" y="11.05" width="3.8" height="3.8" fill="#3d3d3d" stroke="#f6f6f6" stroke-width="1.1"/><rect x="24.57" y="20.95" width="3.8" height="3.8" fill="#3d3d3d" stroke="#f6f6f6" stroke-width="1.1"/><rect x="16.00" y="25.90" width="3.8" height="3.8" fill="#3d3d3d" stroke="#f6f6f6" stroke-width="1.1"/><rect x="7.43" y="20.95" width="3.8" height="3.8" fill="#3d3d3d" stroke="#f6f6f6" stroke-width="1.1"/><rect x="7.43" y="11.05" width="3.8" height="3.8" fill="#3d3d3d" stroke="#f6f6f6" stroke-width="1.1"/><circle cx="17.9" cy="17.9" r="6" fill="#5fdc7c"/><path d="M35 30V35H30Z" fill="#d8cf78"/></svg><div class="sep" style="left:2px;top:36px;width:32px;height:1px"></div><svg style="left:0;top:36px" width="36" height="36" viewBox="0 0 36 36"><path d="M17.9 6.1L23.53 9.35L17.9 12.6L12.27 9.35Z" fill="#6ee48a"/><path d="M12.27 9.35L17.9 12.6V19.1L12.27 15.85Z" fill="#5ad377"/><path d="M23.53 9.35L17.9 12.6V19.1L23.53 15.85Z" fill="#47a95e"/><path d="M12.27 15.850000000000001L17.90 19.1L12.27 22.35L6.64 19.1Z" fill="#6ee48a"/><path d="M6.64 19.1L12.27 22.35V28.85L6.64 25.6Z" fill="#5ad377"/><path d="M17.90 19.1L12.27 22.35V28.85L17.90 25.6Z" fill="#47a95e"/><path d="M23.53 15.850000000000001L29.16 19.1L23.53 22.35L17.90 19.1Z" fill="#6ee48a"/><path d="M17.90 19.1L23.53 22.35V28.85L17.90 25.6Z" fill="#5ad377"/><path d="M29.16 19.1L23.53 22.35V28.85L29.16 25.6Z" fill="#47a95e"/><path d="M35 30V35H30Z" fill="#d8cf78"/></svg><div class="sep" style="left:2px;top:72px;width:32px;height:1px"></div><svg style="left:0;top:72px" width="36" height="36" viewBox="0 0 36 36"><path d="M19.56 11.52L21.05 9.37L23.54 10.81L22.43 13.17L23.44 14.50L24.08 16.04L26.68 16.26L26.68 19.14L24.08 19.36L23.44 20.90L22.43 22.23L23.54 24.59L21.05 26.03L19.56 23.88L17.90 24.10L16.24 23.88L14.75 26.03L12.26 24.59L13.37 22.23L12.36 20.90L11.72 19.36L9.12 19.14L9.12 16.26L11.72 16.04L12.36 14.50L13.37 13.17L12.26 10.81L14.75 9.37L16.24 11.52L17.90 11.30ZM14.50 17.70a3.4 3.4 0 1 0 6.8 0a3.4 3.4 0 1 0 -6.8 0Z" fill="#fafafa" fill-rule="evenodd"/><circle cx="17.90" cy="8.30" r="2.5" fill="#5fdc7c"/><circle cx="26.04" cy="13.00" r="2.5" fill="#5fdc7c"/><circle cx="26.04" cy="22.40" r="2.5" fill="#5fdc7c"/><circle cx="17.90" cy="27.10" r="2.5" fill="#5fdc7c"/><circle cx="9.76" cy="22.40" r="2.5" fill="#5fdc7c"/><circle cx="9.76" cy="13.00" r="2.5" fill="#5fdc7c"/><circle cx="17.9" cy="17.7" r="2.3" fill="#5fdc7c"/><path d="M35 30V35H30Z" fill="#d8cf78"/></svg></div><div class="grp" style="left:1457px;top:381px;width:36px;height:72px;"><svg style="left:0;top:0px" width="36" height="36" viewBox="0 0 36 36"><path d="M8.5 11.5L15.7 6.4L19 7.4Q26.5 11.5 27.8 20V24.5L19.6 29.5L13.2 25L12.4 22.4Q11.4 20.6 8.5 18.3Z" fill="none" stroke="#9c9cf6" stroke-width="1.7" stroke-linejoin="round"/><path d="M11.5 13.8Q18.6 16.6 20 25.6" fill="none" stroke="#9c9cf6" stroke-width="1.5"/><path d="M35 30V35H30Z" fill="#9a9a9a"/></svg><div class="sep" style="left:2px;top:36px;width:32px;height:1px"></div><svg style="left:0;top:36px" width="36" height="36" viewBox="0 0 36 36"><path d="M8.9 9.5V27.1H27" fill="none" stroke="#9c9cf6" stroke-width="1.8"/><path d="M6 10.8L8.9 6.2L11.8 10.8ZM25.4 24.2L30 27.1L25.4 30Z" fill="#9c9cf6"/><path d="M23.00 6.20L28.80 9.55L28.80 16.25L23.00 19.60L17.20 16.25L17.20 9.55Z" fill="none" stroke="#9c9cf6" stroke-width="1.1"/><path d="M17.4 9.8L23 12.5L28.6 9.8M23 12.5V19.4" stroke="#9c9cf6" stroke-width="1.1" fill="none"/><path d="M35 30V35H30Z" fill="#9a9a9a"/></svg></div><div class="grp" style="left:1457px;top:457px;width:36px;height:36px;"><svg style="left:0;top:0px" width="36" height="36" viewBox="0 0 36 36"><path d="M8.5 12.1V23.9L17.4 29V17.2ZM18.8 6.5V18.3L27.8 23.4V11.5Z" fill="none" stroke="#e9a5e4" stroke-width="1.5" stroke-linejoin="miter"/><path d="M13.2 21.1L23.3 14.9" stroke="#e9a5e4" stroke-width="1.1"/><path d="M35 30V35H30Z" fill="#9a9a9a"/></svg></div><div class="grp" style="left:1457px;top:503px;width:36px;height:108px;"><svg style="left:0;top:0px" width="36" height="36" viewBox="0 0 36 36"><circle cx="18" cy="18" r="11.1" fill="none" stroke="#cdd4fb" stroke-width="1.5"/><ellipse cx="18.9" cy="18" rx="4.7" ry="11" fill="none" stroke="#cdd4fb" stroke-width="1.1"/><path d="M7.6 14.3H28.4M7.2 21.4H28.8" stroke="#cdd4fb" stroke-width="1.5"/><rect x="6.2" y="20.3" width="9.3" height="9.2" rx="2" fill="#0a0a0a"/><text x="10.850000000000001" y="27.700000000000003" font-size="7.4" font-weight="bold" text-anchor="middle" fill="#f4f4f4" font-family="Liberation Sans,sans-serif" letter-spacing="-0.4">ST</text><path d="M35 30V35H30Z" fill="#9a9a9a"/></svg><div class="sep" style="left:2px;top:36px;width:32px;height:1px"></div><svg style="left:0;top:36px" width="36" height="36" viewBox="0 0 36 36"><path d="M8.3 14.2V11Q8.3 9.3 10 9.3H17Q18.7 9.3 18.7 11V15" fill="none" stroke="#cdd4fb" stroke-width="1.5"/><path d="M6.7 21V17Q6.7 15.3 8.4 15.3H19.7Q21.4 15.3 21.4 17V24.5Q21.4 26.2 19.7 26.2H15" fill="none" stroke="#cdd4fb" stroke-width="1.5"/><path d="M24.1 18.6L29.6 15.3V25.1L24.1 21.8Z" fill="#cdd4fb"/><rect x="6.2" y="20.6" width="9.3" height="9.2" rx="2" fill="#0a0a0a"/><text x="10.850000000000001" y="28.0" font-size="7.4" font-weight="bold" text-anchor="middle" fill="#f4f4f4" font-family="Liberation Sans,sans-serif" letter-spacing="-0.4">ST</text><path d="M35 30V35H30Z" fill="#9a9a9a"/></svg><div class="sep" style="left:2px;top:72px;width:32px;height:1px"></div><svg style="left:0;top:72px" width="36" height="36" viewBox="0 0 36 36"><path d="M15.9 24.6V23.2Q12.7 21.4 12.7 18Q12.9 12.6 18.1 12.5Q23.3 12.6 23.5 18Q23.5 21.4 20.3 23.2V24.6" fill="none" stroke="#cdd4fb" stroke-width="1.4"/><path d="M15.4 26.1H21.4M15.4 27.8H21.4M16.4 29.5H20.4" stroke="#cdd4fb" stroke-width="1"/><path d="M17.9 6.3V9.8M9.4 9.6L12.1 12.2M26.5 9.6L23.8 12.2M6.2 17.95H9.4M26.5 17.95H29.9" stroke="#cdd4fb" stroke-width="1.7"/><rect x="6.2" y="20.7" width="9.3" height="9.2" rx="2" fill="#0a0a0a"/><text x="10.850000000000001" y="28.1" font-size="7.4" font-weight="bold" text-anchor="middle" fill="#f4f4f4" font-family="Liberation Sans,sans-serif" letter-spacing="-0.4">ST</text><path d="M35 30V35H30Z" fill="#9a9a9a"/></svg></div><div class="grp" style="left:1457px;top:631px;width:36px;height:36px;"><svg style="left:0;top:0px" width="36" height="36" viewBox="0 0 36 36"><path d="M17.40 7.60L26.93 13.10L26.93 24.10L17.40 29.60L7.87 24.10L7.87 13.10Z" fill="none" stroke="#4a4a4a" stroke-width="1.3"/><path d="M15.4 25.4L14.6 21.6L25.6 10.6Q27 9.4 28.4 10.8Q29.6 12.2 28.4 13.4L17.4 24.4Z" fill="#585858" stroke="#3d3d3d" stroke-width="1"/><path d="M24.4 11.6L27.4 14.6" stroke="#3d3d3d" stroke-width="1"/><path d="M35 30V35H30Z" fill="#8a8a8a"/></svg></div><div style="left:1495px;top:77px;width:1425px;height:23px;background:#1c1c1c;width:425px;"></div><div style="left:1495px;top:77px;width:46px;height:23px;background:#2b2b2b;border-radius:3px 3px 0 0;"></div><span class="t" style="left:1506px;top:80.5px;color:#e4e4e4;font-size:11.5px;letter-spacing:-0.5px;">对象</span><span class="t" style="left:1554px;top:80.5px;color:#6a6a6a;font-size:11.5px;letter-spacing:-0.5px;">场次</span><svg style="left:1501px;top:106px;" width="15" height="11" viewBox="0 0 15 11"><path d="M0 1H14M0 5.5H14M0 10H14" stroke="#a8a8a8" stroke-width="1.5"/></svg><span class="t" style="left:1525px;top:102.5px;color:#b4b4b4;font-size:11.5px;letter-spacing:-0.5px;">文件</span><span class="t" style="left:1561px;top:102.5px;color:#b4b4b4;font-size:11.5px;letter-spacing:-0.5px;">编辑</span><span class="t" style="left:1597px;top:102.5px;color:#b4b4b4;font-size:11.5px;letter-spacing:-0.5px;">查看</span><span class="t" style="left:1633px;top:102.5px;color:#b4b4b4;font-size:11.5px;letter-spacing:-0.5px;">对象</span><span class="t" style="left:1669px;top:102.5px;color:#b4b4b4;font-size:11.5px;letter-spacing:-0.5px;">标签</span><span class="t" style="left:1705px;top:102.5px;color:#b4b4b4;font-size:11.5px;letter-spacing:-0.5px;">书签</span><svg style="left:1840px;top:103px;" width="78" height="16" viewBox="0 0 78 16"><circle cx="6.6" cy="6.6" r="4.4" fill="none" stroke="#a8a8a8" stroke-width="1.5"/><path d="M9.8 9.8L14 14" stroke="#a8a8a8" stroke-width="1.8"/><path d="M22.4 14V7L27.6 2L32.8 7V14Z" fill="none" stroke="#a8a8a8" stroke-width="1.4"/><rect x="26.4" y="10.6" width="2.6" height="3.4" fill="#a8a8a8"/><path d="M42 4H55M44.5 8H52.5M47 12H50" stroke="#a8a8a8" stroke-width="1.5"/><path d="M68 3.4H62.6V14.4H73.6V9" fill="none" stroke="#a8a8a8" stroke-width="1.4"/><path d="M66.4 10.6L75 2M70 2H75V7" fill="none" stroke="#a8a8a8" stroke-width="1.4"/></svg><div style="left:1543px;top:124px;width:1px;height:367px;background:#252525;"></div><div style="left:1495px;top:491px;width:425px;height:2px;background:#222;"></div><div style="left:1917px;top:96px;width:6px;height:28px;background:#f5820d;border-radius:3px;"></div><div style="left:1917px;top:121px;width:6px;height:96px;background:#3f7ff4;border-radius:0 0 0 3px;"></div><div style="left:1917px;top:98px;width:6px;height:24px;background:#f5820d;border-radius:3px 0 0 3px;"></div><div style="left:1495px;top:493px;width:425px;height:23px;background:#1c1c1c;"></div><div style="left:1495px;top:493px;width:46px;height:23px;background:#2b2b2b;border-radius:3px 3px 0 0;"></div><span class="t" style="left:1506px;top:496.5px;color:#e4e4e4;font-size:11.5px;letter-spacing:-0.5px;">属性</span><span class="t" style="left:1554px;top:496.5px;color:#6a6a6a;font-size:11.5px;">层</span><svg style="left:1501px;top:522px;" width="15" height="11" viewBox="0 0 15 11"><path d="M0 1H14M0 5.5H14M0 10H14" stroke="#a8a8a8" stroke-width="1.5"/></svg><span class="t" style="left:1525px;top:519.0px;color:#b4b4b4;font-size:11.5px;letter-spacing:-0.5px;">模式</span><span class="t" style="left:1561px;top:519.0px;color:#b4b4b4;font-size:11.5px;letter-spacing:-0.5px;">编辑</span><span class="t" style="left:1597px;top:519.0px;color:#b4b4b4;font-size:11.5px;letter-spacing:-0.5px;">用户数据</span><svg style="left:1760px;top:519px;" width="158" height="16" viewBox="0 0 158 16"><path d="M3 8H16M8 3L3 8L8 13" fill="none" stroke="#4a4a4a" stroke-width="1.4"/><path d="M22 8H35M30 3L35 8L30 13" fill="none" stroke="#4a4a4a" stroke-width="1.4"/><path d="M49 14.5V2M44 7L49 2L54 7" fill="none" stroke="#4a4a4a" stroke-width="1.4"/><circle cx="67.6" cy="6.6" r="4.4" fill="none" stroke="#a8a8a8" stroke-width="1.5"/><path d="M70.8 9.8L75.4 14.4" stroke="#a8a8a8" stroke-width="1.8"/><path d="M82 3.6H96M84.6 7.8H93.4M87.4 12H90.6" stroke="#a8a8a8" stroke-width="1.6"/><rect x="103" y="7.6" width="11" height="7" rx="1" fill="none" stroke="#a8a8a8" stroke-width="1.5"/><path d="M105.4 7.4V5A3.1 3.1 0 0 1 111.6 5V7.4" fill="none" stroke="#a8a8a8" stroke-width="1.4"/><circle cx="129" cy="8.2" r="7" fill="none" stroke="#a8a8a8" stroke-width="1.4"/><circle cx="129" cy="8.2" r="2.4" fill="none" stroke="#a8a8a8" stroke-width="1.4"/><path d="M148 3H142.6V14.4H154V9" fill="none" stroke="#a8a8a8" stroke-width="1.4"/><path d="M146.6 10.4L155.4 1.6M150.4 1.6H155.4V6.6" fill="none" stroke="#a8a8a8" stroke-width="1.4"/></svg><svg style="left:1505px;top:545px;" width="14" height="17" viewBox="0 0 14 17"><path d="M1 2Q1 0.6 2.4 0.6H9L13.4 5V15Q13.4 16.4 12 16.4H2.4Q1 16.4 1 15Z" fill="#d6d6d6"/><circle cx="7.2" cy="9.4" r="2.2" fill="none" stroke="#2a2a2a" stroke-width="1.6"/><circle cx="7.2" cy="9.4" r="3.4" fill="none" stroke="#2a2a2a" stroke-width="1.4" stroke-dasharray="1.5 2.06"/></svg><span class="t" style="left:1527px;top:544.5px;color:#c8c8c8;font-size:11.5px;letter-spacing:-0.5px;">工程</span><div style="left:1823px;top:544.2px;width:89px;height:17.6px;background:#3d3d3d;border-radius:9px;"></div><div style="left:1892px;top:544.2px;width:1px;height:17.6px;background:#2b2b2b;"></div><span class="t" style="left:1829px;top:544.5px;color:#e0e0e0;font-size:11.5px;letter-spacing:-0.5px;">默认</span><svg style="left:1898px;top:551px;" width="8" height="5" viewBox="0 0 8 5"><path d="M0.6 0.2H7.4L4 4.2Z" fill="#c8c8c8"/></svg><div style="left:1503px;top:568.5px;width:40px;height:18.5px;background:#585ca3;border-radius:4px;"></div><span class="t" style="left:1512px;top:569.8px;color:#ffffff;font-size:11.5px;letter-spacing:-0.5px;">工程</span><div style="left:1547px;top:568.5px;width:67px;height:18.5px;background:#3d3d3d;border-radius:4px;"></div><span class="t" style="left:1556px;top:569.8px;color:#d0d0d0;font-size:11.5px;letter-spacing:0px;">Cineware</span><div style="left:1618px;top:568.5px;width:40px;height:18.5px;background:#3d3d3d;border-radius:4px;"></div><span class="t" style="left:1627px;top:569.8px;color:#d0d0d0;font-size:11.5px;letter-spacing:-0.5px;">信息</span><div style="left:1662px;top:568.5px;width:55px;height:18.5px;background:#3d3d3d;border-radius:4px;"></div><svg style="left:1672px;top:572.5px;" width="10" height="11" viewBox="0 0 10 11"><path d="M1 9.6H9M2 9.4Q2.2 1.2 5 1.2Q7.8 1.2 8 9.4" fill="none" stroke="#b8b8b8" stroke-width="1"/></svg><span class="t" style="left:1685px;top:569.8px;color:#d0d0d0;font-size:11.5px;letter-spacing:-0.5px;">子弹</span><div style="left:1721px;top:568.5px;width:62px;height:18.5px;background:#3d3d3d;border-radius:4px;"></div><svg style="left:1731px;top:572.5px;" width="10" height="11" viewBox="0 0 10 11"><path d="M1 9.6H9M2 9.4Q2.2 1.2 5 1.2Q7.8 1.2 8 9.4" fill="none" stroke="#b8b8b8" stroke-width="1"/></svg><span class="t" style="left:1744px;top:569.8px;color:#d0d0d0;font-size:11.5px;letter-spacing:0px;">XRefs</span><div style="left:1787px;top:568.5px;width:55px;height:18.5px;background:#3d3d3d;border-radius:4px;"></div><svg style="left:1797px;top:572.5px;" width="10" height="11" viewBox="0 0 10 11"><path d="M1 9.6H9M2 9.4Q2.2 1.2 5 1.2Q7.8 1.2 8 9.4" fill="none" stroke="#d8cf78" stroke-width="1"/></svg><span class="t" style="left:1810px;top:569.8px;color:#e6d57e;font-size:11.5px;letter-spacing:-0.5px;">模拟</span><div style="left:1503px;top:591.5px;width:77px;height:18.5px;background:#3d3d3d;border-radius:4px;"></div><svg style="left:1513px;top:595.5px;" width="10" height="11" viewBox="0 0 10 11"><path d="M1 9.6H9M2 9.4Q2.2 1.2 5 1.2Q7.8 1.2 8 9.4" fill="none" stroke="#b8b8b8" stroke-width="1"/></svg><span class="t" style="left:1526px;top:592.8px;color:#d0d0d0;font-size:11.5px;letter-spacing:-0.5px;">待办事项</span><div style="left:1584px;top:591.5px;width:55px;height:18.5px;background:#3d3d3d;border-radius:4px;"></div><svg style="left:1594px;top:595.5px;" width="10" height="11" viewBox="0 0 10 11"><path d="M1 9.6H9M2 9.4Q2.2 1.2 5 1.2Q7.8 1.2 8 9.4" fill="none" stroke="#b8b8b8" stroke-width="1"/></svg><span class="t" style="left:1607px;top:592.8px;color:#d0d0d0;font-size:11.5px;letter-spacing:-0.5px;">动画</span><div style="left:1643px;top:591.5px;width:55px;height:18.5px;background:#3d3d3d;border-radius:4px;"></div><svg style="left:1653px;top:595.5px;" width="10" height="11" viewBox="0 0 10 11"><path d="M1 9.6H9M2 9.4Q2.2 1.2 5 1.2Q7.8 1.2 8 9.4" fill="none" stroke="#b8b8b8" stroke-width="1"/></svg><span class="t" style="left:1666px;top:592.8px;color:#d0d0d0;font-size:11.5px;letter-spacing:-0.5px;">节点</span><span class="t" style="left:1503px;top:619.0px;color:#ffffff;font-size:12.5px;font-weight:500;letter-spacing:-0.4px;">工程</span><span class="t" style="left:1525px;top:641.0px;color:#b8b8b8;font-size:11.5px;letter-spacing:-0.5px;">工程缩放</span><div class="fld" style="left:1574px;top:640px;width:78px;height:17.5px;">1</div><div style="left:1658px;top:640px;width:55px;height:17.5px;background:#3d3d3d;border-radius:4px;"></div><span class="t" style="left:1665px;top:641.0px;color:#d0d0d0;font-size:11.5px;letter-spacing:-0.5px;">厘米</span><svg style="left:1699px;top:647px;" width="8" height="5" viewBox="0 0 8 5"><path d="M0.6 0.2H7.4L4 4.2Z" fill="#c8c8c8"/></svg><div style="left:1514px;top:661px;width:74px;height:17.5px;background:#3d3d3d;border-radius:9px;"></div><span class="t" style="left:1525px;top:662.0px;color:#c8c8c8;font-size:11.5px;letter-spacing:-0.5px;">缩放工程...</span><div style="left:1904px;top:614px;width:4.5px;height:323px;background:#484848;border-radius:2px;"></div><div style="left:1501px;top:689px;width:397px;height:1px;background:#383838;"></div><svg style="left:1511.5px;top:697.5px;" width="9" height="7" viewBox="0 0 9 7"><path d="M1 1.2L4.5 5L8 1.2" fill="none" stroke="#b0b0b0" stroke-width="1.2"/></svg><span class="t" style="left:1525px;top:693.0px;color:#e0e0e0;font-size:11.5px;font-weight:500;letter-spacing:-0.5px;">时间</span><span class="t" style="left:1533px;top:719.0px;color:#b8b8b8;font-size:11.5px;letter-spacing:-0.5px;">帧率</span><div class="fld" style="left:1582px;top:718px;width:78px;height:17.5px;">30</div><span class="t" style="left:1685px;top:719.0px;color:#b8b8b8;font-size:11.5px;letter-spacing:-0.5px;">工程时长</span><div class="fld" style="left:1734px;top:718px;width:78px;height:17.5px;">0 F</div><span class="t" style="left:1533px;top:741.0px;color:#b8b8b8;font-size:11.5px;letter-spacing:-0.5px;">最小时长</span><div class="fld" style="left:1582px;top:740px;width:78px;height:17.5px;">0 F</div><span class="t" style="left:1685px;top:741.0px;color:#b8b8b8;font-size:11.5px;letter-spacing:-0.5px;">最大时长</span><div class="fld" style="left:1734px;top:740px;width:78px;height:17.5px;">90 F</div><span class="t" style="left:1533px;top:763.0px;color:#b8b8b8;font-size:11.5px;letter-spacing:-0.5px;">预览最小</span><div class="fld" style="left:1582px;top:762px;width:78px;height:17.5px;">0 F</div><span class="t" style="left:1685px;top:763.0px;color:#b8b8b8;font-size:11.5px;letter-spacing:-0.5px;">预览最大</span><div class="fld" style="left:1734px;top:762px;width:78px;height:17.5px;">90 F</div><div style="left:1501px;top:791px;width:397px;height:1px;background:#383838;"></div><svg style="left:1511.5px;top:801.5px;" width="9" height="7" viewBox="0 0 9 7"><path d="M1 1.2L4.5 5L8 1.2" fill="none" stroke="#b0b0b0" stroke-width="1.2"/></svg><span class="t" style="left:1525px;top:797.0px;color:#e0e0e0;font-size:11.5px;font-weight:500;letter-spacing:-0.5px;">执行</span><span class="t" style="left:1533px;top:822.0px;color:#b8b8b8;font-size:11.5px;letter-spacing:-0.5px;">动画</span><div class="cb" style="left:1571px;top:824px"></div><svg style="left:1571px;top:824px;" width="12" height="12" viewBox="0 0 12 12"><path d="M2.8 6.2L5.2 8.6L9.4 3.6" fill="none" stroke="#fff" stroke-width="1.6"/></svg><span class="t" style="left:1623px;top:822.0px;color:#b8b8b8;font-size:11.5px;letter-spacing:-0.5px;">表达式</span><div class="cb" style="left:1694px;top:824px"></div><svg style="left:1694px;top:824px;" width="12" height="12" viewBox="0 0 12 12"><path d="M2.8 6.2L5.2 8.6L9.4 3.6" fill="none" stroke="#fff" stroke-width="1.6"/></svg><span class="t" style="left:1746px;top:822.0px;color:#b8b8b8;font-size:11.5px;letter-spacing:-0.5px;">生成器</span><div class="cb" style="left:1784px;top:824px"></div><svg style="left:1784px;top:824px;" width="12" height="12" viewBox="0 0 12 12"><path d="M2.8 6.2L5.2 8.6L9.4 3.6" fill="none" stroke="#fff" stroke-width="1.6"/></svg><span class="t" style="left:1533px;top:842.0px;color:#b8b8b8;font-size:11.5px;letter-spacing:-0.5px;">变形器</span><div class="cb" style="left:1571px;top:844px"></div><svg style="left:1571px;top:844px;" width="12" height="12" viewBox="0 0 12 12"><path d="M2.8 6.2L5.2 8.6L9.4 3.6" fill="none" stroke="#fff" stroke-width="1.6"/></svg><span class="t" style="left:1623px;top:842.0px;color:#b8b8b8;font-size:11.5px;letter-spacing:-0.5px;">运动剪辑系统</span><div class="cb" style="left:1694px;top:844px"></div><svg style="left:1694px;top:844px;" width="12" height="12" viewBox="0 0 12 12"><path d="M2.8 6.2L5.2 8.6L9.4 3.6" fill="none" stroke="#fff" stroke-width="1.6"/></svg><div style="left:1501px;top:869px;width:397px;height:1px;background:#383838;"></div><svg style="left:1511.5px;top:879.5px;" width="9" height="7" viewBox="0 0 9 7"><path d="M1 1.2L4.5 5L8 1.2" fill="none" stroke="#b0b0b0" stroke-width="1.2"/></svg><span class="t" style="left:1525px;top:875.0px;color:#e0e0e0;font-size:11.5px;font-weight:500;letter-spacing:-0.5px;">显示</span><span class="t" style="left:1533px;top:899.5px;color:#b8b8b8;font-size:11.5px;letter-spacing:-0.5px;">颜色</span><svg style="left:1705px;top:902px;" width="7" height="10" viewBox="0 0 7 10"><path d="M1.2 1L5.4 5L1.2 9" fill="none" stroke="#c8c8c8" stroke-width="1.3"/></svg><div style="left:1714px;top:899px;width:74px;height:15px;background:#cccccc;"></div><svg style="left:1797px;top:898px;" width="17" height="17" viewBox="0 0 17 17"><path d="M2 15.4L2.6 12L10 4.6L12.6 7.2L5.2 14.6Z" fill="none" stroke="#a8a8a8" stroke-width="1.4"/><path d="M9.6 3.4L13.8 7.6" stroke="#a8a8a8" stroke-width="1.6"/><circle cx="13.4" cy="3.8" r="2.6" fill="#a8a8a8"/></svg><svg style="left:1512.5px;top:922.5px;" width="7" height="10" viewBox="0 0 7 10"><path d="M1.2 1L5.4 5L1.2 9" fill="none" stroke="#c8c8c8" stroke-width="1.3"/></svg><span class="t" style="left:1533px;top:920.0px;color:#b8b8b8;font-size:11.5px;letter-spacing:-0.5px;">视图修剪</span><div style="left:1714px;top:919.5px;width:184px;height:17.5px;background:#3d3d3d;border-radius:4px;"></div><span class="t" style="left:1721px;top:920.5px;color:#d8d8d8;font-size:11.5px;">中</span><svg style="left:1884px;top:926.5px;" width="8" height="5" viewBox="0 0 8 5"><path d="M0.6 0.2H7.4L4 4.2Z" fill="#c8c8c8"/></svg><span class="t" style="left:1533px;top:941.0px;color:#b8b8b8;font-size:11.5px;letter-spacing:-0.5px;">细节级别</span><div class="fld" style="left:1714px;top:940px;width:78px;height:17.5px;">100 %</div><div style="left:1796px;top:946.5px;width:100px;height:3.5px;background:#5a5fb0;border-radius:2px;"></div><div style="left:1894px;top:942px;width:4.4px;height:12px;background:#b4b4b4;border-radius:2px;"></div><span class="t" style="left:1533px;top:962.5px;color:#b8b8b8;font-size:11.5px;letter-spacing:-0.55px;">将渲染细节级别设置用于编辑器渲染</span><div style="left:1714.5px;top:964.5px;width:11px;height:11px;border:1.2px solid #6e6e6e;border-radius:2.5px;"></div><div style="left:1501px;top:989.5px;width:397px;height:1px;background:#383838;"></div><div style="left:1495px;top:992px;width:407px;height:11.5px;overflow:hidden;"><svg style="left:16.5px;top:8.5px;" width="9" height="7" viewBox="0 0 9 7"><path d="M1 1.2L4.5 5L8 1.2" fill="none" stroke="#b0b0b0" stroke-width="1.2"/></svg><span class="t" style="left:30px;top:4.0px;color:#e0e0e0;font-size:11.5px;font-weight:500;letter-spacing:-0.5px;">色彩管理</span></div><svg style="left:38px;top:936px;" width="5" height="20" viewBox="0 0 5 20"><path d="M.5 0V20M3.5 0V20" stroke="#444" stroke-width="1" stroke-dasharray="1 2"/></svg><svg style="left:38px;top:964px;" width="5" height="16" viewBox="0 0 5 16"><path d="M.5 0V16M3.5 0V16" stroke="#444" stroke-width="1" stroke-dasharray="1 2"/></svg><svg style="left:38px;top:986px;" width="5" height="20" viewBox="0 0 5 20"><path d="M.5 0V20M3.5 0V20" stroke="#444" stroke-width="1" stroke-dasharray="1 2"/></svg><div class="grp" style="left:45px;top:932px;width:28px;height:28px;"><svg style="left:0px;top:0" width="28" height="28" viewBox="0 0 28 28"><path d="M14 7.2L20.8 14L14 20.8L7.2 14Z" fill="none" stroke="#e4e4e4" stroke-width="1.7"/></svg></div><div class="grp" style="left:404px;top:932px;width:196px;height:28px;"><svg style="left:0px;top:0" width="28" height="28" viewBox="0 0 28 28"><path d="M7.4 7.6V20.4" stroke="#c4c4c4" stroke-width="2.2"/><path d="M20.6 7.6V20.4L10 14Z" fill="#c4c4c4"/></svg><div class="sep" style="left:27px;top:1px;width:1px;height:26px"></div><svg style="left:28px;top:0" width="28" height="28" viewBox="0 0 28 28"><path d="M9.4 10.4L13 14L9.4 17.6L5.8 14Z" fill="none" stroke="#c4c4c4" stroke-width="1.3"/><path d="M23 8V20L13.6 14Z" fill="#c4c4c4"/></svg><div class="sep" style="left:55px;top:1px;width:1px;height:26px"></div><svg style="left:56px;top:0" width="28" height="28" viewBox="0 0 28 28"><path d="M18 8V20L8.4 14Z" fill="#c4c4c4"/><path d="M20.4 8V20" stroke="#c4c4c4" stroke-width="2"/></svg><div class="sep" style="left:83px;top:1px;width:1px;height:26px"></div><svg style="left:84px;top:0" width="28" height="28" viewBox="0 0 28 28"><path d="M8.6 5.6V22.4L21.6 14Z" fill="#d8d8d8"/></svg><div class="sep" style="left:111px;top:1px;width:1px;height:26px"></div><svg style="left:112px;top:0" width="28" height="28" viewBox="0 0 28 28"><path d="M10 8V20L19.6 14Z" fill="#c4c4c4"/><path d="M7.6 8V20" stroke="#c4c4c4" stroke-width="2"/></svg><div class="sep" style="left:139px;top:1px;width:1px;height:26px"></div><svg style="left:140px;top:0" width="28" height="28" viewBox="0 0 28 28"><path d="M18.6 10.4L22.2 14L18.6 17.6L15 14Z" fill="none" stroke="#c4c4c4" stroke-width="1.3"/><path d="M5 8V20L14.4 14Z" fill="#c4c4c4"/></svg><div class="sep" style="left:167px;top:1px;width:1px;height:26px"></div><svg style="left:168px;top:0" width="28" height="28" viewBox="0 0 28 28"><path d="M20.6 7.6V20.4" stroke="#c4c4c4" stroke-width="2.2"/><path d="M7.4 7.6V20.4L18 14Z" fill="#c4c4c4"/></svg></div><div class="grp" style="left:610px;top:932px;width:84px;height:28px;"><div class="act" style="left:1px;top:1px;width:26px;height:26px;border-radius:4px 0 0 4px"></div><svg style="left:0px;top:0" width="28" height="28" viewBox="0 0 28 28"><path d="M7.4 13V10.4H20.4M17.4 7L20.8 10.4L17.4 13.8" fill="none" stroke="#dcdcdc" stroke-width="1.6"/><path d="M20.6 15V17.6H7.6M10.6 14.2L7.2 17.6L10.6 21" fill="none" stroke="#dcdcdc" stroke-width="1.6"/><path d="M27 22V27H22Z" fill="#a8a8a8"/></svg><div class="act" style="left:28px;top:1px;width:27px;height:26px;border-radius:0"></div><svg style="left:28px;top:0" width="28" height="28" viewBox="0 0 28 28"><text x="14" y="14" font-size="10.5" text-anchor="middle" fill="#dcdcdc" font-family="Liberation Sans,sans-serif">A</text><path d="M5.8 16.6V21.4M9 16.6V21.4M12.2 16.6V21.4M15.4 16.6V21.4" stroke="#dcdcdc" stroke-width="1.5"/><rect x="17.4" y="16.6" width="5.4" height="4.8" fill="#dcdcdc"/><path d="M27 22V27H22Z" fill="#a8a8a8"/></svg><svg style="left:56px;top:0" width="28" height="28" viewBox="0 0 28 28"><path d="M5.4 11.4H9L14 7V21L9 16.6H5.4Z" fill="#c4c4c4"/><path d="M16 10.6Q18.4 14 16 17.4" fill="none" stroke="#c4c4c4" stroke-width="1.5"/><path d="M18.2 7.4Q23.4 14 18.2 20.6" fill="none" stroke="#c4c4c4" stroke-width="1.6"/></svg></div><div style="left:638px;top:932px;width:1px;height:28px;background:#4a4e8e;"></div><div class="fld" style="left:705px;top:937px;width:78px;height:17.5px;">0 F</div><div class="grp" style="left:794px;top:932px;width:84px;height:28px;"><svg style="left:0px;top:0" width="28" height="28" viewBox="0 0 28 28"><circle cx="14" cy="14" r="8.6" fill="#5b3232"/><path d="M14 8.6L19.4 14L14 19.4L8.6 14Z" fill="none" stroke="#7c4545" stroke-width="1.4"/><path d="M27 22V27H22Z" fill="#9a9a9a"/></svg><div class="sep" style="left:27px;top:1px;width:1px;height:26px"></div><svg style="left:28px;top:0" width="28" height="28" viewBox="0 0 28 28"><circle cx="14" cy="14" r="8.8" fill="#e8555a"/><text x="14" y="18.6" font-size="13" text-anchor="middle" fill="#3b2020" font-family="Liberation Sans,sans-serif">A</text></svg><div class="sep" style="left:55px;top:1px;width:1px;height:26px"></div><svg style="left:56px;top:0" width="28" height="28" viewBox="0 0 28 28"><circle cx="14" cy="14" r="8.8" fill="#bcbcbc"/><path d="M13.07 10.52L13.19 9.07L14.81 9.07L14.93 10.52L15.80 10.88L16.55 11.45L17.87 10.83L18.68 12.23L17.48 13.07L17.60 14.00L17.48 14.93L18.68 15.77L17.87 17.17L16.55 16.55L15.80 17.12L14.93 17.48L14.81 18.93L13.19 18.93L13.07 17.48L12.20 17.12L11.45 16.55L10.13 17.17L9.32 15.77L10.52 14.93L10.40 14.00L10.52 13.07L9.32 12.23L10.13 10.83L11.45 11.45L12.20 10.88ZM12.40 14.00a1.6 1.6 0 1 0 3.2 0a1.6 1.6 0 1 0 -3.2 0Z" fill="#3d3d3d" fill-rule="evenodd"/></svg></div><div class="grp" style="left:888px;top:932px;width:56px;height:28px;"><svg style="left:0px;top:0" width="28" height="28" viewBox="0 0 28 28"><circle cx="14" cy="14" r="8.8" fill="#bcbcbc"/><rect x="10.6" y="8.4" width="6.8" height="11.2" rx="3.4" fill="none" stroke="#3b3b3b" stroke-width="1.3"/><path d="M10.6 13H17.4M14 8.4V13" stroke="#3b3b3b" stroke-width="1.1"/><path d="M10.8 12.6V11.4Q11 8.6 14 8.6V12.6Z" fill="#3b3b3b"/></svg><div class="sep" style="left:27px;top:1px;width:1px;height:26px"></div><svg style="left:28px;top:0" width="28" height="28" viewBox="0 0 28 28"><path d="M20.2 7.8A8.8 8.8 0 1 0 22.6 12" fill="none" stroke="#c4c4c4" stroke-width="1.5"/><circle cx="14" cy="14.6" r="2.6" fill="none" stroke="#c4c4c4" stroke-width="1.4"/><path d="M15.8 12.8L21.6 7" stroke="#c4c4c4" stroke-width="1.5"/></svg></div><div class="grp" style="left:954px;top:932px;width:140px;height:28px;"><svg style="left:0px;top:0" width="28" height="28" viewBox="0 0 28 28"><path d="M14 10.8L17.2 14L14 17.2L10.8 14Z" fill="none" stroke="#c4c4c4" stroke-width="1.3"/><path d="M14 5L16.4 8H11.6ZM14 23L16.4 20H11.6ZM5 14L8 11.6V16.4ZM23 14L20 11.6V16.4Z" fill="#c4c4c4"/></svg><div class="sep" style="left:27px;top:1px;width:1px;height:26px"></div><svg style="left:28px;top:0" width="28" height="28" viewBox="0 0 28 28"><path d="M14 10.8L17.2 14L14 17.2L10.8 14Z" fill="none" stroke="#c4c4c4" stroke-width="1.3"/><path d="M8.4 19.6A8 8 0 0 1 14 6" fill="none" stroke="#c4c4c4" stroke-width="1.4"/><path d="M19.6 8.4A8 8 0 0 1 14 22" fill="none" stroke="#c4c4c4" stroke-width="1.4"/><path d="M13.4 3.6L16.8 6L13.4 8.4ZM14.6 19.6L11.2 22L14.6 24.4Z" fill="#c4c4c4"/></svg><div class="sep" style="left:55px;top:1px;width:1px;height:26px"></div><svg style="left:56px;top:0" width="28" height="28" viewBox="0 0 28 28"><path d="M7 14V7H21V21H15" fill="none" stroke="#c4c4c4" stroke-width="1.4"/><path d="M15.4 10.2H18V12.8" fill="none" stroke="#c4c4c4" stroke-width="1.2"/><path d="M10.4 14.400000000000002L13.600000000000001 17.6L10.4 20.8L7.2 17.6Z" fill="none" stroke="#c4c4c4" stroke-width="1.3"/></svg><div class="sep" style="left:83px;top:1px;width:1px;height:26px"></div><svg style="left:84px;top:0" width="28" height="28" viewBox="0 0 28 28"><rect x="5.4" y="7" width="17.2" height="6" rx="3" fill="#d8d8d8"/><rect x="5.4" y="15" width="17.2" height="6" rx="3" fill="#d8d8d8"/><circle cx="18.6" cy="10" r="1.6" fill="#3d3d3d"/><circle cx="9.4" cy="18" r="1.6" fill="#3d3d3d"/></svg><div class="act" style="left:112px;top:1px;width:27px;height:26px;border-radius:0 4px 4px 0"></div><svg style="left:112px;top:0" width="28" height="28" viewBox="0 0 28 28"><circle cx="9.6" cy="20" r="2.8" fill="#d0d0d0"/><path d="M12 8.4A2.8 2.8 0 0 1 17.4 9.6Z" fill="#d0d0d0"/><path d="M18 17.4Q20.6 16.6 21.6 19L19.4 20.6Z" fill="#d0d0d0"/><path d="M8 6L22 22.6" stroke="#d8d8d8" stroke-width="1.8"/></svg></div><div class="grp" style="left:1424px;top:932px;width:28px;height:28px;"><svg style="left:0px;top:0" width="28" height="28" viewBox="0 0 28 28"><path d="M8 6.6V21H22.4" fill="none" stroke="#c4c4c4" stroke-width="1.4"/><path d="M5.8 8.4L8 4.8L10.2 8.4ZM20.6 18.8L24.2 21L20.6 23.2Z" fill="#c4c4c4"/><path d="M9 20L19.4 8.6M15.4 8.4H19.6V12.6" fill="none" stroke="#c4c4c4" stroke-width="1.5"/></svg></div><div style="left:48px;top:962px;width:9px;height:15.5px;background:#6a6ec4;"></div><div style="left:44px;top:978px;width:1412px;height:1px;background:#222;"></div><svg style="left:44px;top:963px;" width="1412" height="22" viewBox="0 0 1412 22"><path d="M8.5 14.5V21" stroke="#e0e0e0" stroke-width="1"/><path d="M24.5 18V20.4" stroke="#b4b4b4" stroke-width="1"/><path d="M39.5 18V20.4" stroke="#b4b4b4" stroke-width="1"/><path d="M55.5 18V20.4" stroke="#b4b4b4" stroke-width="1"/><path d="M70.5 18V20.4" stroke="#b4b4b4" stroke-width="1"/><path d="M86.5 17.6V21" stroke="#c8c8c8" stroke-width="1"/><path d="M101.5 18V20.4" stroke="#b4b4b4" stroke-width="1"/><path d="M117.5 18V20.4" stroke="#b4b4b4" stroke-width="1"/><path d="M132.5 18V20.4" stroke="#b4b4b4" stroke-width="1"/><path d="M148.5 18V20.4" stroke="#b4b4b4" stroke-width="1"/><path d="M163.5 17.6V21" stroke="#c8c8c8" stroke-width="1"/><path d="M179.5 18V20.4" stroke="#b4b4b4" stroke-width="1"/><path d="M194.5 18V20.4" stroke="#b4b4b4" stroke-width="1"/><path d="M210.5 18V20.4" stroke="#b4b4b4" stroke-width="1"/><path d="M225.5 18V20.4" stroke="#b4b4b4" stroke-width="1"/><path d="M241.5 17.6V21" stroke="#c8c8c8" stroke-width="1"/><path d="M256.5 18V20.4" stroke="#b4b4b4" stroke-width="1"/><path d="M272.5 18V20.4" stroke="#b4b4b4" stroke-width="1"/><path d="M287.5 18V20.4" stroke="#b4b4b4" stroke-width="1"/><path d="M303.5 18V20.4" stroke="#b4b4b4" stroke-width="1"/><path d="M318.5 17.6V21" stroke="#c8c8c8" stroke-width="1"/><path d="M334.5 18V20.4" stroke="#b4b4b4" stroke-width="1"/><path d="M349.5 18V20.4" stroke="#b4b4b4" stroke-width="1"/><path d="M365.5 18V20.4" stroke="#b4b4b4" stroke-width="1"/><path d="M380.5 18V20.4" stroke="#b4b4b4" stroke-width="1"/><path d="M396.5 17.6V21" stroke="#c8c8c8" stroke-width="1"/><path d="M411.5 18V20.4" stroke="#b4b4b4" stroke-width="1"/><path d="M427.5 18V20.4" stroke="#b4b4b4" stroke-width="1"/><path d="M442.5 18V20.4" stroke="#b4b4b4" stroke-width="1"/><path d="M458.5 18V20.4" stroke="#b4b4b4" stroke-width="1"/><path d="M473.5 0V21" stroke="#e8e8e8" stroke-width="1"/><path d="M489.5 18V20.4" stroke="#b4b4b4" stroke-width="1"/><path d="M504.5 18V20.4" stroke="#b4b4b4" stroke-width="1"/><path d="M520.5 18V20.4" stroke="#b4b4b4" stroke-width="1"/><path d="M535.5 18V20.4" stroke="#b4b4b4" stroke-width="1"/><path d="M551.5 17.6V21" stroke="#c8c8c8" stroke-width="1"/><path d="M566.5 18V20.4" stroke="#b4b4b4" stroke-width="1"/><path d="M582.5 18V20.4" stroke="#b4b4b4" stroke-width="1"/><path d="M597.5 18V20.4" stroke="#b4b4b4" stroke-width="1"/><path d="M613.5 18V20.4" stroke="#b4b4b4" stroke-width="1"/><path d="M628.5 17.6V21" stroke="#c8c8c8" stroke-width="1"/><path d="M644.5 18V20.4" stroke="#b4b4b4" stroke-width="1"/><path d="M660.5 18V20.4" stroke="#b4b4b4" stroke-width="1"/><path d="M675.5 18V20.4" stroke="#b4b4b4" stroke-width="1"/><path d="M691.5 18V20.4" stroke="#b4b4b4" stroke-width="1"/><path d="M706.5 17.6V21" stroke="#c8c8c8" stroke-width="1"/><path d="M722.5 18V20.4" stroke="#b4b4b4" stroke-width="1"/><path d="M737.5 18V20.4" stroke="#b4b4b4" stroke-width="1"/><path d="M753.5 18V20.4" stroke="#b4b4b4" stroke-width="1"/><path d="M768.5 18V20.4" stroke="#b4b4b4" stroke-width="1"/><path d="M784.5 17.6V21" stroke="#c8c8c8" stroke-width="1"/><path d="M799.5 18V20.4" stroke="#b4b4b4" stroke-width="1"/><path d="M815.5 18V20.4" stroke="#b4b4b4" stroke-width="1"/><path d="M830.5 18V20.4" stroke="#b4b4b4" stroke-width="1"/><path d="M846.5 18V20.4" stroke="#b4b4b4" stroke-width="1"/><path d="M861.5 17.6V21" stroke="#c8c8c8" stroke-width="1"/><path d="M877.5 18V20.4" stroke="#b4b4b4" stroke-width="1"/><path d="M892.5 18V20.4" stroke="#b4b4b4" stroke-width="1"/><path d="M908.5 18V20.4" stroke="#b4b4b4" stroke-width="1"/><path d="M923.5 18V20.4" stroke="#b4b4b4" stroke-width="1"/><path d="M939.5 0V21" stroke="#e8e8e8" stroke-width="1"/><path d="M954.5 18V20.4" stroke="#b4b4b4" stroke-width="1"/><path d="M970.5 18V20.4" stroke="#b4b4b4" stroke-width="1"/><path d="M985.5 18V20.4" stroke="#b4b4b4" stroke-width="1"/><path d="M1001.5 18V20.4" stroke="#b4b4b4" stroke-width="1"/><path d="M1016.5 17.6V21" stroke="#c8c8c8" stroke-width="1"/><path d="M1032.5 18V20.4" stroke="#b4b4b4" stroke-width="1"/><path d="M1047.5 18V20.4" stroke="#b4b4b4" stroke-width="1"/><path d="M1063.5 18V20.4" stroke="#b4b4b4" stroke-width="1"/><path d="M1078.5 18V20.4" stroke="#b4b4b4" stroke-width="1"/><path d="M1094.5 17.6V21" stroke="#c8c8c8" stroke-width="1"/><path d="M1109.5 18V20.4" stroke="#b4b4b4" stroke-width="1"/><path d="M1125.5 18V20.4" stroke="#b4b4b4" stroke-width="1"/><path d="M1140.5 18V20.4" stroke="#b4b4b4" stroke-width="1"/><path d="M1156.5 18V20.4" stroke="#b4b4b4" stroke-width="1"/><path d="M1171.5 17.6V21" stroke="#c8c8c8" stroke-width="1"/><path d="M1187.5 18V20.4" stroke="#b4b4b4" stroke-width="1"/><path d="M1202.5 18V20.4" stroke="#b4b4b4" stroke-width="1"/><path d="M1218.5 18V20.4" stroke="#b4b4b4" stroke-width="1"/><path d="M1233.5 18V20.4" stroke="#b4b4b4" stroke-width="1"/><path d="M1249.5 17.6V21" stroke="#c8c8c8" stroke-width="1"/><path d="M1264.5 18V20.4" stroke="#b4b4b4" stroke-width="1"/><path d="M1280.5 18V20.4" stroke="#b4b4b4" stroke-width="1"/><path d="M1295.5 18V20.4" stroke="#b4b4b4" stroke-width="1"/><path d="M1311.5 18V20.4" stroke="#b4b4b4" stroke-width="1"/><path d="M1327.5 17.6V21" stroke="#c8c8c8" stroke-width="1"/><path d="M1342.5 18V20.4" stroke="#b4b4b4" stroke-width="1"/><path d="M1358.5 18V20.4" stroke="#b4b4b4" stroke-width="1"/><path d="M1373.5 18V20.4" stroke="#b4b4b4" stroke-width="1"/><path d="M1389.5 18V20.4" stroke="#b4b4b4" stroke-width="1"/><path d="M1404.5 0V21" stroke="#e8e8e8" stroke-width="1"/></svg><span class="t" style="left:58px;top:960.5px;color:#7478d0;font-size:12px;letter-spacing:-0.3px;">0</span><span class="t" style="left:126.1px;top:960.5px;color:#c8c8c8;font-size:12px;letter-spacing:-0.3px;">5</span><span class="t" style="left:200.5px;top:960.5px;color:#c8c8c8;font-size:12px;letter-spacing:-0.3px;">10</span><span class="t" style="left:278.1px;top:960.5px;color:#c8c8c8;font-size:12px;letter-spacing:-0.3px;">15</span><span class="t" style="left:355.6px;top:960.5px;color:#c8c8c8;font-size:12px;letter-spacing:-0.3px;">20</span><span class="t" style="left:433.2px;top:960.5px;color:#c8c8c8;font-size:12px;letter-spacing:-0.3px;">25</span><span class="t" style="left:510.8px;top:960.5px;color:#c8c8c8;font-size:12px;letter-spacing:-0.3px;">30</span><span class="t" style="left:588.3px;top:960.5px;color:#c8c8c8;font-size:12px;letter-spacing:-0.3px;">35</span><span class="t" style="left:665.9px;top:960.5px;color:#c8c8c8;font-size:12px;letter-spacing:-0.3px;">40</span><span class="t" style="left:743.4px;top:960.5px;color:#c8c8c8;font-size:12px;letter-spacing:-0.3px;">45</span><span class="t" style="left:821.0px;top:960.5px;color:#c8c8c8;font-size:12px;letter-spacing:-0.3px;">50</span><span class="t" style="left:898.6px;top:960.5px;color:#c8c8c8;font-size:12px;letter-spacing:-0.3px;">55</span><span class="t" style="left:976.1px;top:960.5px;color:#c8c8c8;font-size:12px;letter-spacing:-0.3px;">60</span><span class="t" style="left:1053.7px;top:960.5px;color:#c8c8c8;font-size:12px;letter-spacing:-0.3px;">65</span><span class="t" style="left:1131.2px;top:960.5px;color:#c8c8c8;font-size:12px;letter-spacing:-0.3px;">70</span><span class="t" style="left:1208.8px;top:960.5px;color:#c8c8c8;font-size:12px;letter-spacing:-0.3px;">75</span><span class="t" style="left:1286.4px;top:960.5px;color:#c8c8c8;font-size:12px;letter-spacing:-0.3px;">80</span><span class="t" style="left:1363.9px;top:960.5px;color:#c8c8c8;font-size:12px;letter-spacing:-0.3px;">85</span><span class="t" style="left:1441.5px;top:960.5px;color:#c8c8c8;font-size:12px;letter-spacing:-0.3px;">90</span><div class="fld" style="left:46px;top:987px;width:78px;height:17.5px;">0 F</div><div style="left:132px;top:987px;width:1238px;height:17px;background:#3c3c3c;border-radius:3px;"></div><svg style="left:137px;top:990px;" width="6" height="11" viewBox="0 0 6 11"><path d="M.5 0V11M2.5 0V11M4.5 0V11" stroke="#555" stroke-width="1"/></svg><svg style="left:1361px;top:990px;" width="6" height="11" viewBox="0 0 6 11"><path d="M.5 0V11M2.5 0V11M4.5 0V11" stroke="#555" stroke-width="1"/></svg><span class="t" style="left:147px;top:986.5px;color:#d8d8d8;font-size:11.5px;letter-spacing:0;">0 F</span><span class="t" style="left:1330px;top:986.5px;color:#d8d8d8;font-size:11.5px;letter-spacing:0;">90 F</span><div class="fld" style="left:1377px;top:987px;width:78px;height:17.5px;">90 F</div><div style="left:0px;top:1008px;width:1920px;height:22px;background:#1c1c1c;"></div><svg style="left:4px;top:1014px;" width="16" height="12" viewBox="0 0 16 12"><path d="M0 1H15M0 6H15M0 11H15" stroke="#a8a8a8" stroke-width="1.5"/></svg><svg style="left:28px;top:1012px;" width="16" height="16" viewBox="0 0 16 16"><path d="M13.6 5.4A6.4 6.4 0 1 1 10.4 2.6" fill="none" stroke="#a8a8a8" stroke-width="1.3"/><path d="M4.8 7.6L7.6 10.8L14.4 2.6" fill="none" stroke="#a8a8a8" stroke-width="1.4"/></svg><span class="t" style="left:53px;top:1012.5px;color:#c4c4c4;font-size:11.5px;letter-spacing:-0.46px;">移动：点击并拖动鼠标移动元素。按住 SHIFT 键量化移动；节点编辑模式时按住 SHIFT 键增加选择对象；按住 CTRL 键减少选择对象。</span><div style="left:0px;top:0px;width:1920px;height:23px;background:#f3eff7;"></div><svg style="left:2px;top:2px;" width="18" height="18" viewBox="0 0 18 18"><defs><radialGradient id="lg" cx="0.38" cy="0.62" r="0.6"><stop offset="0" stop-color="#5d7df0"/><stop offset="0.45" stop-color="#2338a8"/><stop offset="1" stop-color="#0a0e38"/></radialGradient><linearGradient id="lr" x1="0" y1="0" x2="1" y2="1"><stop offset="0" stop-color="#e2e2ea"/><stop offset="0.5" stop-color="#8f8fa0"/><stop offset="1" stop-color="#cfcfda"/></linearGradient></defs><circle cx="8.5" cy="8.8" r="7.4" fill="url(#lr)"/><circle cx="8" cy="9.3" r="5.3" fill="#151836"/><circle cx="7.6" cy="9.6" r="4.5" fill="url(#lg)"/><path d="M12.6 3.4L15 5.6L10.4 8.6Z" fill="#2a3fb4"/><path d="M3.2 6.2A6.6 6.6 0 0 1 10.5 2" stroke="#ffffff" stroke-width="1.2" fill="none" opacity=".9"/></svg><span class="t" style="left:24px;top:4.0px;color:#000;font-size:12px;letter-spacing:-0.12px;">Cinema 4D R26.015 - [未标题 1] - 主要</span><svg style="left:1795px;top:0px;" width="120" height="23" viewBox="0 0 120 23"><path d="M4 10.5H14" stroke="#111" stroke-width="1"/><rect x="49.5" y="7.5" width="7" height="7" rx="1.5" fill="none" stroke="#111" stroke-width="1"/><path d="M51.5 7.5V6.5Q51.5 5.5 52.5 5.5H57Q58.5 5.5 58.5 7V11.5Q58.5 12.5 57.5 12.5H56.5" fill="none" stroke="#111" stroke-width="1"/><path d="M95 5.5L105 15.5M105 5.5L95 15.5" stroke="#111" stroke-width="1.1"/></svg><div style="left:1311px;top:-6px;width:72px;height:10px;background:#3f80f6;border-radius:5px;"></div><div style="left:1427px;top:-8px;width:304px;height:10px;background:#cfccd4;border-radius:0 0 6px 6px;box-shadow:0 0 4px 1px #cfccd4;opacity:.8;"></div><div style="left:0px;top:23px;width:1920px;height:25px;background:#1c1c1c;"></div><svg style="left:6px;top:30px;" width="48" height="14" viewBox="0 0 48 14"><path d="M6.5 7.5Q13.2 1.6 19 10" stroke="#474747" stroke-width="2.4" fill="none"/><path d="M2.75 4.2V10H9.4Z" fill="#474747"/><path d="M40.25 7.5Q33.6 1.6 27.3 10" stroke="#474747" stroke-width="2.4" fill="none"/><path d="M44 4.2V10H37.3Z" fill="#474747"/></svg><div style="left:58px;top:26px;width:79px;height:22px;background:#2b2b2b;border-radius:3px 3px 0 0;"></div><span class="t" style="left:65px;top:29.0px;color:#d8d8d8;">未标题 1</span><svg style="left:120px;top:32px;" width="10" height="10" viewBox="0 0 10 10"><path d="M2 2L8 8M8 2L2 8" stroke="#d0d0d0" stroke-width="1.6"/></svg><svg style="left:146px;top:31.5px;" width="12" height="12" viewBox="0 0 12 12"><path d="M6 1.2V10.8M1.2 6H10.8" stroke="#e0e0e0" stroke-width="2.2"/></svg><span class="t" style="left:1114px;top:27.799999999999997px;color:#e0e0e0;font-size:12px;letter-spacing:-0.3px;">Standard</span><span class="t" style="left:1204px;top:27.799999999999997px;color:#6e6e6e;font-size:12px;letter-spacing:-0.3px;">Model</span><span class="t" style="left:1280px;top:27.799999999999997px;color:#6e6e6e;font-size:12px;letter-spacing:-0.3px;">Sculpt</span><span class="t" style="left:1355px;top:27.799999999999997px;color:#6e6e6e;font-size:12px;letter-spacing:-0.3px;">UVEdit</span><span class="t" style="left:1433px;top:27.799999999999997px;color:#6e6e6e;font-size:12px;letter-spacing:-0.3px;">Paint</span><span class="t" style="left:1502px;top:27.799999999999997px;color:#6e6e6e;font-size:12px;letter-spacing:-0.3px;">Groom</span><span class="t" style="left:1582px;top:27.799999999999997px;color:#6e6e6e;font-size:12px;letter-spacing:-0.3px;">Track</span><span class="t" style="left:1652px;top:27.799999999999997px;color:#6e6e6e;font-size:12px;letter-spacing:-0.3px;">Script</span><span class="t" style="left:1725px;top:27.799999999999997px;color:#6e6e6e;font-size:12px;letter-spacing:-0.3px;">Nodes</span><div style="left:1107px;top:44px;width:62px;height:3px;background:#6d71c7;"></div><svg style="left:1799px;top:32px;" width="10" height="10" viewBox="0 0 10 10"><path d="M5 0.5V9.5M0.5 5H9.5" stroke="#e8e8e8" stroke-width="1.8"/></svg><div style="left:1827px;top:28px;width:1px;height:15px;background:#e0e0e0;"></div><span class="t" style="left:1843px;top:29.0px;color:#f0f0f0;font-size:11.5px;">新界面</span><div style="left:1893px;top:33px;width:18px;height:9px;background:#f4f4f4;border-radius:5px;"></div><div style="left:1903px;top:34.5px;width:6px;height:6px;background:#222;border-radius:3px;"></div><span class="t" style="left:1581px;top:19.8px;color:#ffffff;font-size:15px;text-shadow:0 0 2px #000,0 1px 1px #000;letter-spacing:-0.4px;">FPS</span><span class="t" style="left:1614px;top:19.8px;color:#ffffff;font-size:15px;text-shadow:0 0 2px #000,0 1px 1px #000;letter-spacing:-0.4px;font-weight:bold;word-spacing:-0.5px;letter-spacing:-0.85px;">N/A</span><span class="t" style="left:1665px;top:19.8px;color:#ffffff;font-size:15px;text-shadow:0 0 2px #000,0 1px 1px #000;letter-spacing:-0.4px;">GPU</span><span class="t" style="left:1701px;top:19.8px;color:#ffffff;font-size:15px;text-shadow:0 0 2px #000,0 1px 1px #000;letter-spacing:-0.4px;font-weight:bold;word-spacing:-0.5px;letter-spacing:-0.85px;">25 %</span><span class="t" style="left:1755px;top:19.8px;color:#ffffff;font-size:15px;text-shadow:0 0 2px #000,0 1px 1px #000;letter-spacing:-0.4px;">CPU</span><span class="t" style="left:1793px;top:19.8px;color:#ffffff;font-size:15px;text-shadow:0 0 2px #000,0 1px 1px #000;letter-spacing:-0.4px;font-weight:bold;word-spacing:-0.5px;letter-spacing:-0.85px;">5 %</span><span class="t" style="left:1843px;top:19.8px;color:#ffffff;font-size:15px;text-shadow:0 0 2px #000,0 1px 1px #000;letter-spacing:-0.4px;">延迟</span><span class="t" style="left:1878px;top:19.8px;color:#ffffff;font-size:15px;text-shadow:0 0 2px #000,0 1px 1px #000;letter-spacing:-0.4px;font-weight:bold;word-spacing:-0.5px;letter-spacing:-0.85px;">N/A</span><div style="left:1650px;top:15px;width:1px;height:20px;background:#e8e8e8;box-shadow:0 0 1px #000;"></div><div style="left:1740px;top:15px;width:1px;height:20px;background:#e8e8e8;box-shadow:0 0 1px #000;"></div><div style="left:1827px;top:15px;width:1px;height:20px;background:#e8e8e8;box-shadow:0 0 1px #000;"></div><span class="t" style="left:8px;top:54.2px;color:#b8b8b8;font-size:11.5px;letter-spacing:-0.5px;">文件</span><span class="t" style="left:44px;top:54.2px;color:#e6d57e;font-size:11.5px;letter-spacing:-0.5px;">编辑</span><span class="t" style="left:80px;top:54.2px;color:#e6d57e;font-size:11.5px;letter-spacing:-0.5px;">创建</span><span class="t" style="left:116px;top:54.2px;color:#b8b8b8;font-size:11.5px;letter-spacing:-0.5px;">模式</span><span class="t" style="left:152px;top:54.2px;color:#b8b8b8;font-size:11.5px;letter-spacing:-0.5px;">选择</span><span class="t" style="left:188px;top:54.2px;color:#b8b8b8;font-size:11.5px;letter-spacing:-0.5px;">工具</span><span class="t" style="left:224px;top:54.2px;color:#b8b8b8;font-size:11.5px;letter-spacing:-0.5px;">样条</span><span class="t" style="left:260px;top:54.2px;color:#e6d57e;font-size:11.5px;letter-spacing:-0.5px;">网格</span><span class="t" style="left:296px;top:54.2px;color:#b8b8b8;font-size:11.5px;letter-spacing:-0.5px;">体积</span><span class="t" style="left:332px;top:54.2px;color:#b8b8b8;font-size:11.5px;letter-spacing:-0.5px;">运动图形</span><span class="t" style="left:390px;top:54.2px;color:#e6d57e;font-size:11.5px;letter-spacing:-0.5px;">角色</span><span class="t" style="left:426px;top:54.2px;color:#b8b8b8;font-size:11.5px;letter-spacing:-0.5px;">动画</span><span class="t" style="left:462px;top:54.2px;color:#e6d57e;font-size:11.5px;letter-spacing:-0.5px;">模拟</span><span class="t" style="left:498px;top:54.2px;color:#b8b8b8;font-size:11.5px;letter-spacing:-0.5px;">跟踪器</span><span class="t" style="left:545px;top:54.2px;color:#e6d57e;font-size:11.5px;letter-spacing:-0.5px;">渲染</span><span class="t" style="left:581px;top:54.2px;color:#b8b8b8;font-size:11.5px;letter-spacing:-0.5px;">扩展</span><span class="t" style="left:617px;top:54.2px;color:#e6d57e;font-size:11.5px;letter-spacing:-0.5px;">窗口</span><span class="t" style="left:653px;top:54.2px;color:#b8b8b8;font-size:11.5px;letter-spacing:-0.5px;">帮助</span><div style="left:1783px;top:209px;width:140px;height:80px;background:linear-gradient(180deg,#dedee8 0%,#e4e3ec 45%,#f0f0f6 80%,#fafafc 100%);border-radius:40px;box-shadow:0 10px 8px -3px rgba(238,238,246,.6), 0 16px 10px -6px rgba(238,238,246,.25), inset 0 0 5px 2px rgba(255,255,255,.85);"></div><svg style="left:1834.8px;top:219.2px" width="86" height="72" viewBox="0 0 80 62" preserveAspectRatio="none"><defs><linearGradient id="hg" x1="0.2" y1="0" x2="0.55" y2="1"><stop offset="0" stop-color="#e2e1ea"/><stop offset="0.7" stop-color="#ebeaf1"/><stop offset="0.88" stop-color="#f6f3df"/><stop offset="1" stop-color="#e6f2f0"/></linearGradient><filter id="hb" x="-10%" y="-10%" width="120%" height="120%"><feGaussianBlur stdDeviation="0.7"/></filter></defs><path d="M38 18Q44 4 58 6Q72 10 70 26Q66 44 42 58Q10 46 4 30Q0 14 14 11Q28 9 38 18Z" fill="url(#hg)" stroke="#f3f2f8" stroke-width="2.2" filter="url(#hb)"/></svg><span class="t" style="left:1805px;top:220.0px;color:#8e8ca6;font-size:14px;font-weight:900;">中</span><svg style="left:1804px;top:240px;" width="20" height="15" viewBox="0 0 20 15"><path d="M6.4 1.6Q9.6 4 12.8 1.6L17.8 4.8L15.4 8.2L13.8 7.2V13.6H5.4V7.2L3.8 8.2L1.4 4.8Z" fill="#8e8ca6"/></svg><span class="t" style="left:1807px;top:263.0px;color:#8e8ca6;font-size:15.5px;font-weight:bold;transform:scaleX(1.35) skewX(-6deg);">S</span></body></html>
